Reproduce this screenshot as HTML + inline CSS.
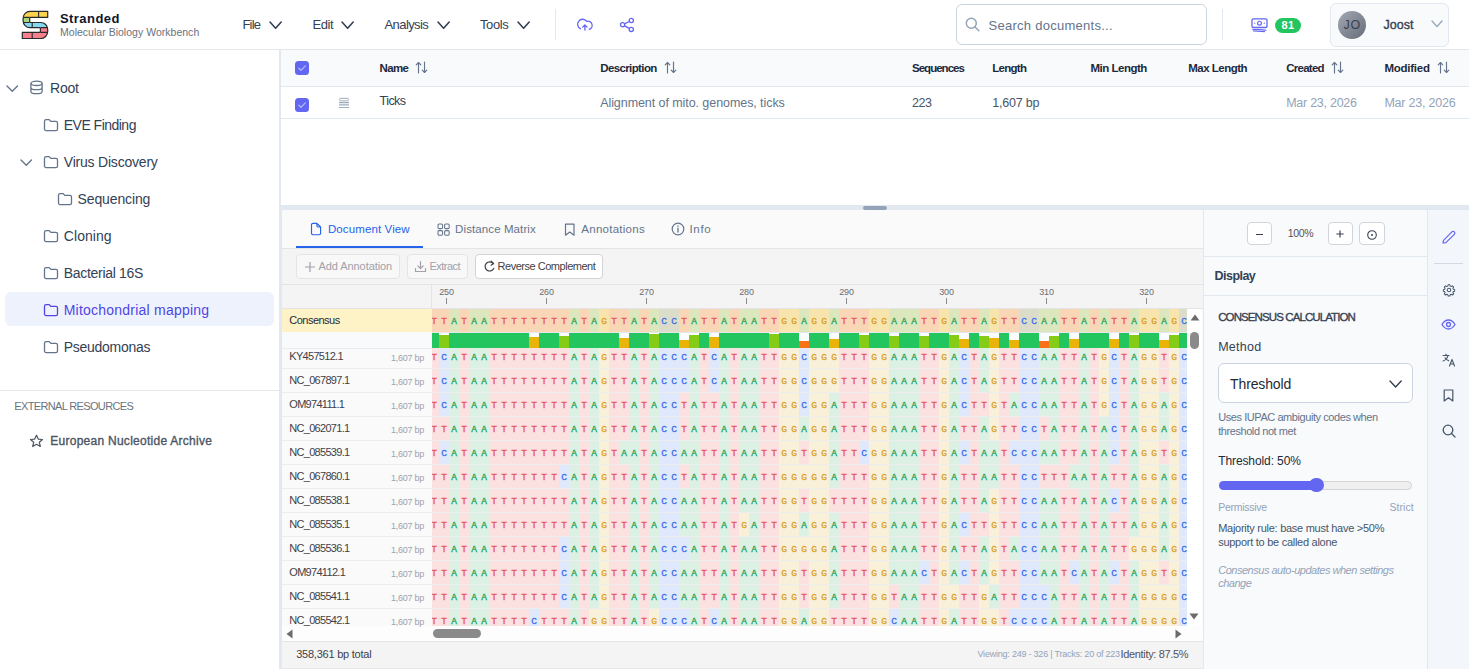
<!DOCTYPE html><html><head><meta charset="utf-8"><style>
*{margin:0;padding:0;box-sizing:content-box}
html,body{width:1469px;height:669px;overflow:hidden;background:#fff;font-family:'Liberation Sans',sans-serif}
.box{position:absolute}
.ic{position:absolute;overflow:visible}
.t{position:absolute;white-space:pre;line-height:normal}
.cbx{position:absolute;width:14px;height:14px;border-radius:3.5px;background:#6366f1}
.aln{position:absolute;overflow:hidden}
.ar{position:absolute;left:0;width:755px}
.ar i{position:absolute;top:0;width:10px;height:100%;font:9.5px/25.5px 'Liberation Mono',monospace;-webkit-text-stroke:0.3px currentColor;text-align:center;font-style:normal}
.cb{position:absolute;left:0;width:755px;background:#fbfcfe}
.cb b{position:absolute;bottom:0}
</style></head><body>
<div class="box" style="left:0;top:0;width:1469px;height:49px;background:#fff;border-bottom:1px solid #e5e7eb"></div>
<svg class="ic" style="left:18px;top:8px;" width="34" height="34" viewBox="0 0 34 34"><defs><clipPath id="sclip"><path d="M29.7 3.3H12C8.2 3.3 5.1 6.4 5.1 10.2V12.7C5.1 16.5 8.2 19.6 12 19.6H21.4C22 19.6 22.4 20 22.4 20.6V23.4C22.4 24 22 24.4 21.4 24.4H4.3V30.5H22.7C26.6 30.5 29.7 27.4 29.7 23.5V21.5C29.7 17.6 26.6 14.5 22.7 14.5H12.7C12.1 14.5 11.7 14.1 11.7 13.5V10.4C11.7 9.8 12.1 9.4 12.7 9.4H29.7Z"/></clipPath></defs>
<g clip-path="url(#sclip)"><rect x="0" y="0" width="34" height="9.4" fill="#fcd34d"/><rect x="0" y="9.4" width="34" height="5.1" fill="#a8d47a"/><rect x="0" y="14.5" width="34" height="5.1" fill="#86d8ee"/><rect x="0" y="19.6" width="34" height="12" fill="#f77f8e"/></g>
<path d="M29.7 3.3H12C8.2 3.3 5.1 6.4 5.1 10.2V12.7C5.1 16.5 8.2 19.6 12 19.6H21.4C22 19.6 22.4 20 22.4 20.6V23.4C22.4 24 22 24.4 21.4 24.4H4.3V30.5H22.7C26.6 30.5 29.7 27.4 29.7 23.5V21.5C29.7 17.6 26.6 14.5 22.7 14.5H12.7C12.1 14.5 11.7 14.1 11.7 13.5V10.4C11.7 9.8 12.1 9.4 12.7 9.4H29.7Z" fill="none" stroke="#2a2a2a" stroke-width="1.2" stroke-linejoin="round"/>
<path d="M5 9.4H11.7M5 14.5H11.7M22.4 19.6H29.8M22.4 24.4H29.8M20.6 3.3V9.4M14.2 14.5V19.6M14.2 24.4V30.5" stroke="#2a2a2a" stroke-width="1.1"/></svg>
<svg class="ic" style="left:268.8px;top:21.2px" width="13.2" height="8.2" viewBox="-1 -1 13.2 8.2"><path d="M0 0L5.6 6.2L11.2 0" fill="none" stroke="#334155" stroke-width="1.6" stroke-linecap="round" stroke-linejoin="round"/></svg>
<svg class="ic" style="left:341px;top:21.2px" width="13.2" height="8.2" viewBox="-1 -1 13.2 8.2"><path d="M0 0L5.6 6.2L11.2 0" fill="none" stroke="#334155" stroke-width="1.6" stroke-linecap="round" stroke-linejoin="round"/></svg>
<svg class="ic" style="left:437.2px;top:21.2px" width="13.2" height="8.2" viewBox="-1 -1 13.2 8.2"><path d="M0 0L5.6 6.2L11.2 0" fill="none" stroke="#334155" stroke-width="1.6" stroke-linecap="round" stroke-linejoin="round"/></svg>
<svg class="ic" style="left:516.7px;top:21.2px" width="13.2" height="8.2" viewBox="-1 -1 13.2 8.2"><path d="M0 0L5.6 6.2L11.2 0" fill="none" stroke="#334155" stroke-width="1.6" stroke-linecap="round" stroke-linejoin="round"/></svg>
<div class="box" style="left:555px;top:9px;width:1px;height:31px;background:#e2e8f0"></div>
<svg class="ic" style="left:577px;top:17px;" width="16" height="16" viewBox="0 0 16 16"><path d="M3.5 11.8A5 5 0 1 1 9.7 4.4A4.1 4.1 0 0 1 12.2 12.4M7.9 13V8M5.7 10.1L7.9 7.9L10.1 10.1" fill="none" stroke="#6366f1" stroke-width="1.3" stroke-linecap="round" stroke-linejoin="round"/></svg>
<svg class="ic" style="left:618px;top:17px;" width="17" height="16" viewBox="0 0 17 16"><circle cx="13.3" cy="3.5" r="2.1" fill="none" stroke="#6366f1" stroke-width="1.3"/><circle cx="4.6" cy="7.8" r="2.1" fill="none" stroke="#6366f1" stroke-width="1.3"/><circle cx="13.3" cy="12.4" r="2.1" fill="none" stroke="#6366f1" stroke-width="1.3"/><path d="M6.5 6.8L11.4 4.5M6.5 8.9L11.4 11.4" stroke="#6366f1" stroke-width="1.3"/></svg>
<div class="box" style="left:956px;top:4px;width:249px;height:39px;border:1px solid #cbd5e1;border-radius:6px;background:#fff"></div>
<svg class="ic" style="left:965px;top:17px;" width="15" height="15" viewBox="0 0 15 15"><circle cx="6.3" cy="6.3" r="5" fill="none" stroke="#94a3b8" stroke-width="1.5"/><path d="M10 10L13.8 13.8" stroke="#94a3b8" stroke-width="1.5" stroke-linecap="round"/></svg>
<div class="box" style="left:1222px;top:9px;width:1px;height:31px;background:#e2e8f0"></div>
<svg class="ic" style="left:1250px;top:17px;" width="19" height="16" viewBox="0 0 19 16"><rect x="2" y="1.8" width="15" height="8.7" rx="1.3" fill="none" stroke="#6366f1" stroke-width="1.3"/><circle cx="9.5" cy="6.15" r="1.9" fill="none" stroke="#6366f1" stroke-width="1.2"/><circle cx="4.7" cy="6.15" r="0.6" fill="#6366f1"/><circle cx="14.3" cy="6.15" r="0.6" fill="#6366f1"/><path d="M2.6 12.2C6 12.4 11 12.9 16 13.2M3.5 13.9C7 14.1 11 14.5 14.5 14.6" fill="none" stroke="#6366f1" stroke-width="1.1" stroke-linecap="round"/></svg>
<div class="box" style="left:1275px;top:18px;width:26px;height:14.5px;border-radius:8px;background:#22c55e"></div>
<div class="box" style="left:1330px;top:3px;width:117px;height:42px;border:1px solid #e2e8f0;border-radius:6px;background:#f8fafc"></div>
<div class="box" style="left:1338px;top:10.5px;width:28px;height:28px;border-radius:50%;background:linear-gradient(135deg,#a3a9b3,#666d79)"></div>
<svg class="ic" style="left:1430.5px;top:20px" width="12" height="7.6" viewBox="-1 -1 12 7.6"><path d="M0 0L5.0 5.6L10 0" fill="none" stroke="#94a3b8" stroke-width="1.3" stroke-linecap="round" stroke-linejoin="round"/></svg>
<div class="box" style="left:279px;top:50px;width:2px;height:619px;background:#e2e8f0"></div>
<svg class="ic" style="left:5.7px;top:84.5px" width="12.5" height="7.2" viewBox="-1 -1 12.5 7.2"><path d="M0 0L5.25 5.2L10.5 0" fill="none" stroke="#64748b" stroke-width="1.4" stroke-linecap="round" stroke-linejoin="round"/></svg>
<svg class="ic" style="left:28.7px;top:80.3px;" width="15" height="15" viewBox="0 0 15 15"><ellipse cx="7.5" cy="3.3" rx="5.6" ry="2.2" fill="none" stroke="#64748b" stroke-width="1.3"/><path d="M1.9 3.3V11.5C1.9 12.7 4.4 13.7 7.5 13.7C10.6 13.7 13.1 12.7 13.1 11.5V3.3M1.9 7.4C1.9 8.6 4.4 9.6 7.5 9.6C10.6 9.6 13.1 8.6 13.1 7.4" fill="none" stroke="#64748b" stroke-width="1.3"/></svg>
<svg class="ic" style="left:43px;top:118px;" width="16" height="14" viewBox="0 0 16 14"><path d="M1.5 3.2C1.5 2.3 2.2 1.6 3.1 1.6H6.2L7.8 3.4H12.9C13.8 3.4 14.5 4.1 14.5 5V11C14.5 11.9 13.8 12.6 12.9 12.6H3.1C2.2 12.6 1.5 11.9 1.5 11Z" fill="none" stroke="#64748b" stroke-width="1.3" stroke-linejoin="round"/></svg>
<svg class="ic" style="left:19.7px;top:158.5px" width="12.5" height="7.2" viewBox="-1 -1 12.5 7.2"><path d="M0 0L5.25 5.2L10.5 0" fill="none" stroke="#64748b" stroke-width="1.4" stroke-linecap="round" stroke-linejoin="round"/></svg>
<svg class="ic" style="left:43px;top:155px;" width="16" height="14" viewBox="0 0 16 14"><path d="M1.5 3.2C1.5 2.3 2.2 1.6 3.1 1.6H6.2L7.8 3.4H12.9C13.8 3.4 14.5 4.1 14.5 5V11C14.5 11.9 13.8 12.6 12.9 12.6H3.1C2.2 12.6 1.5 11.9 1.5 11Z" fill="none" stroke="#64748b" stroke-width="1.3" stroke-linejoin="round"/></svg>
<svg class="ic" style="left:57px;top:192px;" width="16" height="14" viewBox="0 0 16 14"><path d="M1.5 3.2C1.5 2.3 2.2 1.6 3.1 1.6H6.2L7.8 3.4H12.9C13.8 3.4 14.5 4.1 14.5 5V11C14.5 11.9 13.8 12.6 12.9 12.6H3.1C2.2 12.6 1.5 11.9 1.5 11Z" fill="none" stroke="#64748b" stroke-width="1.3" stroke-linejoin="round"/></svg>
<svg class="ic" style="left:43px;top:229px;" width="16" height="14" viewBox="0 0 16 14"><path d="M1.5 3.2C1.5 2.3 2.2 1.6 3.1 1.6H6.2L7.8 3.4H12.9C13.8 3.4 14.5 4.1 14.5 5V11C14.5 11.9 13.8 12.6 12.9 12.6H3.1C2.2 12.6 1.5 11.9 1.5 11Z" fill="none" stroke="#64748b" stroke-width="1.3" stroke-linejoin="round"/></svg>
<svg class="ic" style="left:43px;top:266px;" width="16" height="14" viewBox="0 0 16 14"><path d="M1.5 3.2C1.5 2.3 2.2 1.6 3.1 1.6H6.2L7.8 3.4H12.9C13.8 3.4 14.5 4.1 14.5 5V11C14.5 11.9 13.8 12.6 12.9 12.6H3.1C2.2 12.6 1.5 11.9 1.5 11Z" fill="none" stroke="#64748b" stroke-width="1.3" stroke-linejoin="round"/></svg>
<div class="box" style="left:5px;top:292px;width:269px;height:34px;border-radius:6px;background:#eef2fd"></div>
<svg class="ic" style="left:43px;top:303px;" width="16" height="14" viewBox="0 0 16 14"><path d="M1.5 3.2C1.5 2.3 2.2 1.6 3.1 1.6H6.2L7.8 3.4H12.9C13.8 3.4 14.5 4.1 14.5 5V11C14.5 11.9 13.8 12.6 12.9 12.6H3.1C2.2 12.6 1.5 11.9 1.5 11Z" fill="none" stroke="#4f46e5" stroke-width="1.3" stroke-linejoin="round"/></svg>
<svg class="ic" style="left:43px;top:340px;" width="16" height="14" viewBox="0 0 16 14"><path d="M1.5 3.2C1.5 2.3 2.2 1.6 3.1 1.6H6.2L7.8 3.4H12.9C13.8 3.4 14.5 4.1 14.5 5V11C14.5 11.9 13.8 12.6 12.9 12.6H3.1C2.2 12.6 1.5 11.9 1.5 11Z" fill="none" stroke="#64748b" stroke-width="1.3" stroke-linejoin="round"/></svg>
<div class="box" style="left:0;top:390px;width:279px;height:1px;background:#e5e7eb"></div>
<svg class="ic" style="left:28.5px;top:434px;" width="15" height="14" viewBox="0 0 15 14"><path d="M7.5 1.2L9.3 5.1L13.5 5.5L10.3 8.3L11.3 12.5L7.5 10.3L3.7 12.5L4.7 8.3L1.5 5.5L5.7 5.1Z" fill="none" stroke="#4b5563" stroke-width="1.2" stroke-linejoin="round"/></svg>
<div class="box" style="left:281px;top:50px;width:1188px;height:36px;background:#f8fafc;border-bottom:1px solid #e2e8f0"></div>
<div class="box" style="left:281px;top:118px;width:1188px;height:1px;background:#e2e8f0"></div>
<div class="cbx" style="left:295px;top:61px"></div><svg class="ic" style="left:295px;top:61px;" width="14" height="14" viewBox="0 0 14 14"><path d="M3.8 7.2L6 9.3L10.3 4.9" fill="none" stroke="#b4bcfb" stroke-width="1.2" stroke-linecap="round" stroke-linejoin="round"/></svg>
<div class="cbx" style="left:295px;top:98px"></div><svg class="ic" style="left:295px;top:98px;" width="14" height="14" viewBox="0 0 14 14"><path d="M3.8 7.2L6 9.3L10.3 4.9" fill="none" stroke="#b4bcfb" stroke-width="1.2" stroke-linecap="round" stroke-linejoin="round"/></svg>
<svg class="ic" style="left:338px;top:97px;" width="12" height="12" viewBox="0 0 12 12"><rect x="1.5" y="1.3" width="9" height="2.6" rx="1.3" fill="none" stroke="#a0acbd" stroke-width="1"/><path d="M1 5.6H11M1 7.9H11M1 10.5H11" stroke="#a0acbd" stroke-width="1.1"/></svg>
<svg class="ic" style="left:414.5px;top:60.5px;" width="13" height="13" viewBox="0 0 13 13"><path d="M3.5 12V1.5M1.2 3.8L3.5 1.5L5.8 3.8M9.5 1V11.5M7.2 9.2L9.5 11.5L11.8 9.2" fill="none" stroke="#64748b" stroke-width="1.15" stroke-linecap="round" stroke-linejoin="round"/></svg>
<svg class="ic" style="left:663.5px;top:60.5px;" width="13" height="13" viewBox="0 0 13 13"><path d="M3.5 12V1.5M1.2 3.8L3.5 1.5L5.8 3.8M9.5 1V11.5M7.2 9.2L9.5 11.5L11.8 9.2" fill="none" stroke="#64748b" stroke-width="1.15" stroke-linecap="round" stroke-linejoin="round"/></svg>
<svg class="ic" style="left:1330.5px;top:60.5px;" width="13" height="13" viewBox="0 0 13 13"><path d="M3.5 12V1.5M1.2 3.8L3.5 1.5L5.8 3.8M9.5 1V11.5M7.2 9.2L9.5 11.5L11.8 9.2" fill="none" stroke="#64748b" stroke-width="1.15" stroke-linecap="round" stroke-linejoin="round"/></svg>
<svg class="ic" style="left:1436.5px;top:60.5px;" width="13" height="13" viewBox="0 0 13 13"><path d="M3.5 12V1.5M1.2 3.8L3.5 1.5L5.8 3.8M9.5 1V11.5M7.2 9.2L9.5 11.5L11.8 9.2" fill="none" stroke="#64748b" stroke-width="1.15" stroke-linecap="round" stroke-linejoin="round"/></svg>
<div class="box" style="left:281px;top:205px;width:1188px;height:5px;background:#e2e8f0"></div>
<div class="box" style="left:863px;top:206px;width:24px;height:4px;border-radius:2px;background:#94a3b8"></div>
<div class="box" style="left:281px;top:210px;width:922px;height:459px;background:#fafafa;border-left:1px solid #e5e7eb"></div>
<div class="box" style="left:282px;top:248px;width:921px;height:1px;background:#e4e4e7"></div>
<div class="box" style="left:296px;top:246px;width:127px;height:2px;background:#2563eb"></div>
<svg class="ic" style="left:310px;top:222px;" width="12" height="14" viewBox="0 0 12 14"><path d="M2.9 1.3H6.9L10.6 5V11.3C10.6 12.1 10 12.7 9.2 12.7H2.9C2.1 12.7 1.5 12.1 1.5 11.3V2.7C1.5 1.9 2.1 1.3 2.9 1.3ZM6.9 1.3V3.8C6.9 4.5 7.4 5 8.1 5H10.6" fill="none" stroke="#2563eb" stroke-width="1.15" stroke-linejoin="round"/></svg>
<svg class="ic" style="left:436.5px;top:222.5px;" width="14" height="13" viewBox="0 0 14 13"><rect x="1" y="1" width="4.6" height="4.6" rx="1.2" fill="none" stroke="#64748b" stroke-width="1.05"/><rect x="7.6" y="1" width="4.6" height="4.6" rx="1.2" fill="none" stroke="#64748b" stroke-width="1.05"/><rect x="1" y="7.6" width="4.6" height="4.6" rx="1.2" fill="none" stroke="#64748b" stroke-width="1.05"/><rect x="7.6" y="7.6" width="4.6" height="4.6" rx="1.2" fill="none" stroke="#64748b" stroke-width="1.05"/></svg>
<svg class="ic" style="left:563.5px;top:222.5px;" width="12" height="13" viewBox="0 0 12 13"><path d="M1.5 1.2H10V12.2L5.75 9L1.5 12.2Z" fill="none" stroke="#64748b" stroke-width="1.2" stroke-linejoin="round"/></svg>
<svg class="ic" style="left:671px;top:222px;" width="14" height="14" viewBox="0 0 14 14"><circle cx="7" cy="7" r="5.8" fill="none" stroke="#64748b" stroke-width="1.2"/><path d="M7 6.2V10M7 4V4.3" stroke="#64748b" stroke-width="1.3" stroke-linecap="round"/></svg>
<div class="box" style="left:282px;top:249px;width:921px;height:35px;background:#f4f4f5;border-bottom:1px solid #e4e4e7"></div>
<div class="box" style="left:296px;top:254px;width:102px;height:23px;border:1px solid #e4e4e7;border-radius:4px;background:#f8f8f8"></div>
<svg class="ic" style="left:303.5px;top:260.5px;" width="12" height="12" viewBox="0 0 12 12"><path d="M6 1V11M1 6H11" stroke="#a1a1aa" stroke-width="1.2"/></svg>
<div class="box" style="left:407px;top:254px;width:59px;height:23px;border:1px solid #e4e4e7;border-radius:4px;background:#f8f8f8"></div>
<svg class="ic" style="left:414px;top:259.5px;" width="13" height="13" viewBox="0 0 13 13"><path d="M6.5 1.5V8.5M3.8 5.8L6.5 8.5L9.2 5.8M1.5 8.5V11.5H11.5V8.5" fill="none" stroke="#a1a1aa" stroke-width="1.2" stroke-linecap="round" stroke-linejoin="round"/></svg>
<div class="box" style="left:475px;top:254px;width:126px;height:23px;border:1px solid #d4d4d8;border-radius:4px;background:#fff"></div>
<svg class="ic" style="left:482.5px;top:259.5px;" width="12" height="13" viewBox="0 0 12 13"><path d="M10.3 3.5A4.6 4.6 0 1 0 10.8 8.5" fill="none" stroke="#3f3f46" stroke-width="1.2" stroke-linecap="round"/><path d="M8.2 1.2L10.6 3.6L8.2 5.2" fill="none" stroke="#3f3f46" stroke-width="1.2" stroke-linecap="round" stroke-linejoin="round"/></svg>
<div class="box" style="left:282px;top:285px;width:921px;height:23px;background:#f4f4f5;border-bottom:1px solid #e4e4e7"></div>
<div class="box" style="left:431px;top:285px;width:1px;height:24px;background:#e4e4e7"></div>
<div class="box" style="left:446px;top:298px;width:1px;height:6px;background:#8a8a92"></div>
<div class="box" style="left:546px;top:298px;width:1px;height:6px;background:#8a8a92"></div>
<div class="box" style="left:646px;top:298px;width:1px;height:6px;background:#8a8a92"></div>
<div class="box" style="left:746px;top:298px;width:1px;height:6px;background:#8a8a92"></div>
<div class="box" style="left:846px;top:298px;width:1px;height:6px;background:#8a8a92"></div>
<div class="box" style="left:946px;top:298px;width:1px;height:6px;background:#8a8a92"></div>
<div class="box" style="left:1046px;top:298px;width:1px;height:6px;background:#8a8a92"></div>
<div class="box" style="left:1146px;top:298px;width:1px;height:6px;background:#8a8a92"></div>
<div class="box" style="left:282px;top:309px;width:150px;height:23px;background:#fef3c7"></div>
<div class="box" style="left:282px;top:332px;width:150px;height:16px;background:#f8fafc"></div>
<div class="box" style="left:282px;top:348px;width:905px;height:1px;background:#ececef"></div>
<div class="box" style="left:282px;top:349px;width:150px;height:19px;background:#fafafa"></div>
<div class="box" style="left:282px;top:368px;width:905px;height:1px;background:#ededed"></div>
<div class="box" style="left:282px;top:369px;width:150px;height:23px;background:#fafafa"></div>
<div class="box" style="left:282px;top:392px;width:905px;height:1px;background:#ededed"></div>
<div class="box" style="left:282px;top:393px;width:150px;height:23px;background:#fafafa"></div>
<div class="box" style="left:282px;top:416px;width:905px;height:1px;background:#ededed"></div>
<div class="box" style="left:282px;top:417px;width:150px;height:23px;background:#fafafa"></div>
<div class="box" style="left:282px;top:440px;width:905px;height:1px;background:#ededed"></div>
<div class="box" style="left:282px;top:441px;width:150px;height:23px;background:#fafafa"></div>
<div class="box" style="left:282px;top:464px;width:905px;height:1px;background:#ededed"></div>
<div class="box" style="left:282px;top:465px;width:150px;height:23px;background:#fafafa"></div>
<div class="box" style="left:282px;top:488px;width:905px;height:1px;background:#ededed"></div>
<div class="box" style="left:282px;top:489px;width:150px;height:23px;background:#fafafa"></div>
<div class="box" style="left:282px;top:512px;width:905px;height:1px;background:#ededed"></div>
<div class="box" style="left:282px;top:513px;width:150px;height:23px;background:#fafafa"></div>
<div class="box" style="left:282px;top:536px;width:905px;height:1px;background:#ededed"></div>
<div class="box" style="left:282px;top:537px;width:150px;height:23px;background:#fafafa"></div>
<div class="box" style="left:282px;top:560px;width:905px;height:1px;background:#ededed"></div>
<div class="box" style="left:282px;top:561px;width:150px;height:23px;background:#fafafa"></div>
<div class="box" style="left:282px;top:584px;width:905px;height:1px;background:#ededed"></div>
<div class="box" style="left:282px;top:585px;width:150px;height:23px;background:#fafafa"></div>
<div class="box" style="left:282px;top:608px;width:905px;height:1px;background:#ededed"></div>
<div class="box" style="left:282px;top:609px;width:150px;height:23px;background:#fafafa"></div>
<div class="box" style="left:282px;top:632px;width:905px;height:1px;background:#ededed"></div>
<div class="aln" style="left:432px;top:0;width:755px;height:626px"><div class="ar" style="top:309px;height:23px"><i style="left:-3px;background:#f9d7b6;color:#e65a5a">T</i><i style="left:7px;background:#f9d7b6;color:#e65a5a">T</i><i style="left:17px;background:#dde7be;color:#27a35a">A</i><i style="left:27px;background:#f9d7b6;color:#e65a5a">T</i><i style="left:37px;background:#dde7be;color:#27a35a">A</i><i style="left:47px;background:#dde7be;color:#27a35a">A</i><i style="left:57px;background:#f9d7b6;color:#e65a5a">T</i><i style="left:67px;background:#f9d7b6;color:#e65a5a">T</i><i style="left:77px;background:#f9d7b6;color:#e65a5a">T</i><i style="left:87px;background:#f9d7b6;color:#e65a5a">T</i><i style="left:97px;background:#f9d7b6;color:#e65a5a">T</i><i style="left:107px;background:#f9d7b6;color:#e65a5a">T</i><i style="left:117px;background:#f9d7b6;color:#e65a5a">T</i><i style="left:127px;background:#f9d7b6;color:#e65a5a">T</i><i style="left:137px;background:#dde7be;color:#27a35a">A</i><i style="left:147px;background:#f9d7b6;color:#e65a5a">T</i><i style="left:157px;background:#dde7be;color:#27a35a">A</i><i style="left:167px;background:#f8e5ad;color:#d6a026">G</i><i style="left:177px;background:#f9d7b6;color:#e65a5a">T</i><i style="left:187px;background:#f9d7b6;color:#e65a5a">T</i><i style="left:197px;background:#dde7be;color:#27a35a">A</i><i style="left:207px;background:#f9d7b6;color:#e65a5a">T</i><i style="left:217px;background:#dde7be;color:#27a35a">A</i><i style="left:227px;background:#dcdccb;color:#3a6fe8">C</i><i style="left:237px;background:#dcdccb;color:#3a6fe8">C</i><i style="left:247px;background:#f9d7b6;color:#e65a5a">T</i><i style="left:257px;background:#dde7be;color:#27a35a">A</i><i style="left:267px;background:#f9d7b6;color:#e65a5a">T</i><i style="left:277px;background:#f9d7b6;color:#e65a5a">T</i><i style="left:287px;background:#dde7be;color:#27a35a">A</i><i style="left:297px;background:#f9d7b6;color:#e65a5a">T</i><i style="left:307px;background:#dde7be;color:#27a35a">A</i><i style="left:317px;background:#dde7be;color:#27a35a">A</i><i style="left:327px;background:#f9d7b6;color:#e65a5a">T</i><i style="left:337px;background:#f9d7b6;color:#e65a5a">T</i><i style="left:347px;background:#f8e5ad;color:#d6a026">G</i><i style="left:357px;background:#f8e5ad;color:#d6a026">G</i><i style="left:367px;background:#dde7be;color:#27a35a">A</i><i style="left:377px;background:#f8e5ad;color:#d6a026">G</i><i style="left:387px;background:#f8e5ad;color:#d6a026">G</i><i style="left:397px;background:#dde7be;color:#27a35a">A</i><i style="left:407px;background:#f9d7b6;color:#e65a5a">T</i><i style="left:417px;background:#f9d7b6;color:#e65a5a">T</i><i style="left:427px;background:#f9d7b6;color:#e65a5a">T</i><i style="left:437px;background:#f8e5ad;color:#d6a026">G</i><i style="left:447px;background:#f8e5ad;color:#d6a026">G</i><i style="left:457px;background:#dde7be;color:#27a35a">A</i><i style="left:467px;background:#dde7be;color:#27a35a">A</i><i style="left:477px;background:#dde7be;color:#27a35a">A</i><i style="left:487px;background:#f9d7b6;color:#e65a5a">T</i><i style="left:497px;background:#f9d7b6;color:#e65a5a">T</i><i style="left:507px;background:#f8e5ad;color:#d6a026">G</i><i style="left:517px;background:#dde7be;color:#27a35a">A</i><i style="left:527px;background:#f9d7b6;color:#e65a5a">T</i><i style="left:537px;background:#f9d7b6;color:#e65a5a">T</i><i style="left:547px;background:#dde7be;color:#27a35a">A</i><i style="left:557px;background:#f8e5ad;color:#d6a026">G</i><i style="left:567px;background:#f9d7b6;color:#e65a5a">T</i><i style="left:577px;background:#f9d7b6;color:#e65a5a">T</i><i style="left:587px;background:#dcdccb;color:#3a6fe8">C</i><i style="left:597px;background:#dcdccb;color:#3a6fe8">C</i><i style="left:607px;background:#dde7be;color:#27a35a">A</i><i style="left:617px;background:#dde7be;color:#27a35a">A</i><i style="left:627px;background:#f9d7b6;color:#e65a5a">T</i><i style="left:637px;background:#f9d7b6;color:#e65a5a">T</i><i style="left:647px;background:#dde7be;color:#27a35a">A</i><i style="left:657px;background:#f9d7b6;color:#e65a5a">T</i><i style="left:667px;background:#dde7be;color:#27a35a">A</i><i style="left:677px;background:#f9d7b6;color:#e65a5a">T</i><i style="left:687px;background:#f9d7b6;color:#e65a5a">T</i><i style="left:697px;background:#dde7be;color:#27a35a">A</i><i style="left:707px;background:#f8e5ad;color:#d6a026">G</i><i style="left:717px;background:#f8e5ad;color:#d6a026">G</i><i style="left:727px;background:#dde7be;color:#27a35a">A</i><i style="left:737px;background:#f8e5ad;color:#d6a026">G</i><i style="left:747px;background:#dcdccb;color:#3a6fe8">C</i></div>
<div class="ar sr" style="top:345px;height:23px"><i style="left:-3px;background:#fce1e1;color:#e65a5a">T</i><i style="left:7px;background:#e0e8fc;color:#3a6fe8">C</i><i style="left:17px;background:#dcf1e3;color:#27a35a">A</i><i style="left:27px;background:#fce1e1;color:#e65a5a">T</i><i style="left:37px;background:#dcf1e3;color:#27a35a">A</i><i style="left:47px;background:#dcf1e3;color:#27a35a">A</i><i style="left:57px;background:#fce1e1;color:#e65a5a">T</i><i style="left:67px;background:#fce1e1;color:#e65a5a">T</i><i style="left:77px;background:#fce1e1;color:#e65a5a">T</i><i style="left:87px;background:#fce1e1;color:#e65a5a">T</i><i style="left:97px;background:#fce1e1;color:#e65a5a">T</i><i style="left:107px;background:#fce1e1;color:#e65a5a">T</i><i style="left:117px;background:#fce1e1;color:#e65a5a">T</i><i style="left:127px;background:#fce1e1;color:#e65a5a">T</i><i style="left:137px;background:#dcf1e3;color:#27a35a">A</i><i style="left:147px;background:#fce1e1;color:#e65a5a">T</i><i style="left:157px;background:#dcf1e3;color:#27a35a">A</i><i style="left:167px;background:#f9f0da;color:#d6a026">G</i><i style="left:177px;background:#fce1e1;color:#e65a5a">T</i><i style="left:187px;background:#fce1e1;color:#e65a5a">T</i><i style="left:197px;background:#dcf1e3;color:#27a35a">A</i><i style="left:207px;background:#fce1e1;color:#e65a5a">T</i><i style="left:217px;background:#dcf1e3;color:#27a35a">A</i><i style="left:227px;background:#e0e8fc;color:#3a6fe8">C</i><i style="left:237px;background:#e0e8fc;color:#3a6fe8">C</i><i style="left:247px;background:#e0e8fc;color:#3a6fe8">C</i><i style="left:257px;background:#dcf1e3;color:#27a35a">A</i><i style="left:267px;background:#fce1e1;color:#e65a5a">T</i><i style="left:277px;background:#e0e8fc;color:#3a6fe8">C</i><i style="left:287px;background:#dcf1e3;color:#27a35a">A</i><i style="left:297px;background:#fce1e1;color:#e65a5a">T</i><i style="left:307px;background:#dcf1e3;color:#27a35a">A</i><i style="left:317px;background:#dcf1e3;color:#27a35a">A</i><i style="left:327px;background:#fce1e1;color:#e65a5a">T</i><i style="left:337px;background:#fce1e1;color:#e65a5a">T</i><i style="left:347px;background:#f9f0da;color:#d6a026">G</i><i style="left:357px;background:#f9f0da;color:#d6a026">G</i><i style="left:367px;background:#e0e8fc;color:#3a6fe8">C</i><i style="left:377px;background:#f9f0da;color:#d6a026">G</i><i style="left:387px;background:#f9f0da;color:#d6a026">G</i><i style="left:397px;background:#f9f0da;color:#d6a026">G</i><i style="left:407px;background:#fce1e1;color:#e65a5a">T</i><i style="left:417px;background:#fce1e1;color:#e65a5a">T</i><i style="left:427px;background:#fce1e1;color:#e65a5a">T</i><i style="left:437px;background:#f9f0da;color:#d6a026">G</i><i style="left:447px;background:#f9f0da;color:#d6a026">G</i><i style="left:457px;background:#dcf1e3;color:#27a35a">A</i><i style="left:467px;background:#dcf1e3;color:#27a35a">A</i><i style="left:477px;background:#dcf1e3;color:#27a35a">A</i><i style="left:487px;background:#fce1e1;color:#e65a5a">T</i><i style="left:497px;background:#fce1e1;color:#e65a5a">T</i><i style="left:507px;background:#f9f0da;color:#d6a026">G</i><i style="left:517px;background:#dcf1e3;color:#27a35a">A</i><i style="left:527px;background:#e0e8fc;color:#3a6fe8">C</i><i style="left:537px;background:#fce1e1;color:#e65a5a">T</i><i style="left:547px;background:#dcf1e3;color:#27a35a">A</i><i style="left:557px;background:#f9f0da;color:#d6a026">G</i><i style="left:567px;background:#fce1e1;color:#e65a5a">T</i><i style="left:577px;background:#fce1e1;color:#e65a5a">T</i><i style="left:587px;background:#e0e8fc;color:#3a6fe8">C</i><i style="left:597px;background:#e0e8fc;color:#3a6fe8">C</i><i style="left:607px;background:#dcf1e3;color:#27a35a">A</i><i style="left:617px;background:#dcf1e3;color:#27a35a">A</i><i style="left:627px;background:#fce1e1;color:#e65a5a">T</i><i style="left:637px;background:#fce1e1;color:#e65a5a">T</i><i style="left:647px;background:#dcf1e3;color:#27a35a">A</i><i style="left:657px;background:#fce1e1;color:#e65a5a">T</i><i style="left:667px;background:#f9f0da;color:#d6a026">G</i><i style="left:677px;background:#e0e8fc;color:#3a6fe8">C</i><i style="left:687px;background:#fce1e1;color:#e65a5a">T</i><i style="left:697px;background:#dcf1e3;color:#27a35a">A</i><i style="left:707px;background:#f9f0da;color:#d6a026">G</i><i style="left:717px;background:#f9f0da;color:#d6a026">G</i><i style="left:727px;background:#fce1e1;color:#e65a5a">T</i><i style="left:737px;background:#f9f0da;color:#d6a026">G</i><i style="left:747px;background:#e0e8fc;color:#3a6fe8">C</i></div>
<div class="ar sr" style="top:369px;height:23px"><i style="left:-3px;background:#fce1e1;color:#e65a5a">T</i><i style="left:7px;background:#e0e8fc;color:#3a6fe8">C</i><i style="left:17px;background:#dcf1e3;color:#27a35a">A</i><i style="left:27px;background:#fce1e1;color:#e65a5a">T</i><i style="left:37px;background:#dcf1e3;color:#27a35a">A</i><i style="left:47px;background:#dcf1e3;color:#27a35a">A</i><i style="left:57px;background:#fce1e1;color:#e65a5a">T</i><i style="left:67px;background:#fce1e1;color:#e65a5a">T</i><i style="left:77px;background:#fce1e1;color:#e65a5a">T</i><i style="left:87px;background:#fce1e1;color:#e65a5a">T</i><i style="left:97px;background:#fce1e1;color:#e65a5a">T</i><i style="left:107px;background:#fce1e1;color:#e65a5a">T</i><i style="left:117px;background:#fce1e1;color:#e65a5a">T</i><i style="left:127px;background:#fce1e1;color:#e65a5a">T</i><i style="left:137px;background:#dcf1e3;color:#27a35a">A</i><i style="left:147px;background:#fce1e1;color:#e65a5a">T</i><i style="left:157px;background:#dcf1e3;color:#27a35a">A</i><i style="left:167px;background:#f9f0da;color:#d6a026">G</i><i style="left:177px;background:#fce1e1;color:#e65a5a">T</i><i style="left:187px;background:#fce1e1;color:#e65a5a">T</i><i style="left:197px;background:#dcf1e3;color:#27a35a">A</i><i style="left:207px;background:#fce1e1;color:#e65a5a">T</i><i style="left:217px;background:#dcf1e3;color:#27a35a">A</i><i style="left:227px;background:#e0e8fc;color:#3a6fe8">C</i><i style="left:237px;background:#e0e8fc;color:#3a6fe8">C</i><i style="left:247px;background:#e0e8fc;color:#3a6fe8">C</i><i style="left:257px;background:#dcf1e3;color:#27a35a">A</i><i style="left:267px;background:#fce1e1;color:#e65a5a">T</i><i style="left:277px;background:#e0e8fc;color:#3a6fe8">C</i><i style="left:287px;background:#dcf1e3;color:#27a35a">A</i><i style="left:297px;background:#fce1e1;color:#e65a5a">T</i><i style="left:307px;background:#dcf1e3;color:#27a35a">A</i><i style="left:317px;background:#dcf1e3;color:#27a35a">A</i><i style="left:327px;background:#fce1e1;color:#e65a5a">T</i><i style="left:337px;background:#fce1e1;color:#e65a5a">T</i><i style="left:347px;background:#f9f0da;color:#d6a026">G</i><i style="left:357px;background:#f9f0da;color:#d6a026">G</i><i style="left:367px;background:#e0e8fc;color:#3a6fe8">C</i><i style="left:377px;background:#f9f0da;color:#d6a026">G</i><i style="left:387px;background:#f9f0da;color:#d6a026">G</i><i style="left:397px;background:#f9f0da;color:#d6a026">G</i><i style="left:407px;background:#fce1e1;color:#e65a5a">T</i><i style="left:417px;background:#fce1e1;color:#e65a5a">T</i><i style="left:427px;background:#fce1e1;color:#e65a5a">T</i><i style="left:437px;background:#f9f0da;color:#d6a026">G</i><i style="left:447px;background:#f9f0da;color:#d6a026">G</i><i style="left:457px;background:#dcf1e3;color:#27a35a">A</i><i style="left:467px;background:#dcf1e3;color:#27a35a">A</i><i style="left:477px;background:#dcf1e3;color:#27a35a">A</i><i style="left:487px;background:#fce1e1;color:#e65a5a">T</i><i style="left:497px;background:#fce1e1;color:#e65a5a">T</i><i style="left:507px;background:#f9f0da;color:#d6a026">G</i><i style="left:517px;background:#dcf1e3;color:#27a35a">A</i><i style="left:527px;background:#e0e8fc;color:#3a6fe8">C</i><i style="left:537px;background:#fce1e1;color:#e65a5a">T</i><i style="left:547px;background:#dcf1e3;color:#27a35a">A</i><i style="left:557px;background:#f9f0da;color:#d6a026">G</i><i style="left:567px;background:#fce1e1;color:#e65a5a">T</i><i style="left:577px;background:#fce1e1;color:#e65a5a">T</i><i style="left:587px;background:#e0e8fc;color:#3a6fe8">C</i><i style="left:597px;background:#e0e8fc;color:#3a6fe8">C</i><i style="left:607px;background:#dcf1e3;color:#27a35a">A</i><i style="left:617px;background:#dcf1e3;color:#27a35a">A</i><i style="left:627px;background:#fce1e1;color:#e65a5a">T</i><i style="left:637px;background:#fce1e1;color:#e65a5a">T</i><i style="left:647px;background:#dcf1e3;color:#27a35a">A</i><i style="left:657px;background:#fce1e1;color:#e65a5a">T</i><i style="left:667px;background:#f9f0da;color:#d6a026">G</i><i style="left:677px;background:#e0e8fc;color:#3a6fe8">C</i><i style="left:687px;background:#fce1e1;color:#e65a5a">T</i><i style="left:697px;background:#dcf1e3;color:#27a35a">A</i><i style="left:707px;background:#f9f0da;color:#d6a026">G</i><i style="left:717px;background:#f9f0da;color:#d6a026">G</i><i style="left:727px;background:#fce1e1;color:#e65a5a">T</i><i style="left:737px;background:#f9f0da;color:#d6a026">G</i><i style="left:747px;background:#e0e8fc;color:#3a6fe8">C</i></div>
<div class="ar sr" style="top:393px;height:23px"><i style="left:-3px;background:#fce1e1;color:#e65a5a">T</i><i style="left:7px;background:#e0e8fc;color:#3a6fe8">C</i><i style="left:17px;background:#dcf1e3;color:#27a35a">A</i><i style="left:27px;background:#fce1e1;color:#e65a5a">T</i><i style="left:37px;background:#dcf1e3;color:#27a35a">A</i><i style="left:47px;background:#dcf1e3;color:#27a35a">A</i><i style="left:57px;background:#fce1e1;color:#e65a5a">T</i><i style="left:67px;background:#fce1e1;color:#e65a5a">T</i><i style="left:77px;background:#fce1e1;color:#e65a5a">T</i><i style="left:87px;background:#fce1e1;color:#e65a5a">T</i><i style="left:97px;background:#fce1e1;color:#e65a5a">T</i><i style="left:107px;background:#fce1e1;color:#e65a5a">T</i><i style="left:117px;background:#fce1e1;color:#e65a5a">T</i><i style="left:127px;background:#fce1e1;color:#e65a5a">T</i><i style="left:137px;background:#dcf1e3;color:#27a35a">A</i><i style="left:147px;background:#fce1e1;color:#e65a5a">T</i><i style="left:157px;background:#dcf1e3;color:#27a35a">A</i><i style="left:167px;background:#f9f0da;color:#d6a026">G</i><i style="left:177px;background:#fce1e1;color:#e65a5a">T</i><i style="left:187px;background:#fce1e1;color:#e65a5a">T</i><i style="left:197px;background:#dcf1e3;color:#27a35a">A</i><i style="left:207px;background:#fce1e1;color:#e65a5a">T</i><i style="left:217px;background:#dcf1e3;color:#27a35a">A</i><i style="left:227px;background:#e0e8fc;color:#3a6fe8">C</i><i style="left:237px;background:#e0e8fc;color:#3a6fe8">C</i><i style="left:247px;background:#fce1e1;color:#e65a5a">T</i><i style="left:257px;background:#dcf1e3;color:#27a35a">A</i><i style="left:267px;background:#fce1e1;color:#e65a5a">T</i><i style="left:277px;background:#fce1e1;color:#e65a5a">T</i><i style="left:287px;background:#dcf1e3;color:#27a35a">A</i><i style="left:297px;background:#fce1e1;color:#e65a5a">T</i><i style="left:307px;background:#dcf1e3;color:#27a35a">A</i><i style="left:317px;background:#dcf1e3;color:#27a35a">A</i><i style="left:327px;background:#fce1e1;color:#e65a5a">T</i><i style="left:337px;background:#fce1e1;color:#e65a5a">T</i><i style="left:347px;background:#f9f0da;color:#d6a026">G</i><i style="left:357px;background:#f9f0da;color:#d6a026">G</i><i style="left:367px;background:#e0e8fc;color:#3a6fe8">C</i><i style="left:377px;background:#f9f0da;color:#d6a026">G</i><i style="left:387px;background:#f9f0da;color:#d6a026">G</i><i style="left:397px;background:#dcf1e3;color:#27a35a">A</i><i style="left:407px;background:#fce1e1;color:#e65a5a">T</i><i style="left:417px;background:#fce1e1;color:#e65a5a">T</i><i style="left:427px;background:#fce1e1;color:#e65a5a">T</i><i style="left:437px;background:#f9f0da;color:#d6a026">G</i><i style="left:447px;background:#f9f0da;color:#d6a026">G</i><i style="left:457px;background:#dcf1e3;color:#27a35a">A</i><i style="left:467px;background:#dcf1e3;color:#27a35a">A</i><i style="left:477px;background:#dcf1e3;color:#27a35a">A</i><i style="left:487px;background:#fce1e1;color:#e65a5a">T</i><i style="left:497px;background:#fce1e1;color:#e65a5a">T</i><i style="left:507px;background:#f9f0da;color:#d6a026">G</i><i style="left:517px;background:#dcf1e3;color:#27a35a">A</i><i style="left:527px;background:#e0e8fc;color:#3a6fe8">C</i><i style="left:537px;background:#fce1e1;color:#e65a5a">T</i><i style="left:547px;background:#fce1e1;color:#e65a5a">T</i><i style="left:557px;background:#f9f0da;color:#d6a026">G</i><i style="left:567px;background:#fce1e1;color:#e65a5a">T</i><i style="left:577px;background:#dcf1e3;color:#27a35a">A</i><i style="left:587px;background:#e0e8fc;color:#3a6fe8">C</i><i style="left:597px;background:#e0e8fc;color:#3a6fe8">C</i><i style="left:607px;background:#dcf1e3;color:#27a35a">A</i><i style="left:617px;background:#dcf1e3;color:#27a35a">A</i><i style="left:627px;background:#fce1e1;color:#e65a5a">T</i><i style="left:637px;background:#fce1e1;color:#e65a5a">T</i><i style="left:647px;background:#dcf1e3;color:#27a35a">A</i><i style="left:657px;background:#fce1e1;color:#e65a5a">T</i><i style="left:667px;background:#f9f0da;color:#d6a026">G</i><i style="left:677px;background:#e0e8fc;color:#3a6fe8">C</i><i style="left:687px;background:#fce1e1;color:#e65a5a">T</i><i style="left:697px;background:#dcf1e3;color:#27a35a">A</i><i style="left:707px;background:#f9f0da;color:#d6a026">G</i><i style="left:717px;background:#f9f0da;color:#d6a026">G</i><i style="left:727px;background:#dcf1e3;color:#27a35a">A</i><i style="left:737px;background:#f9f0da;color:#d6a026">G</i><i style="left:747px;background:#e0e8fc;color:#3a6fe8">C</i></div>
<div class="ar sr" style="top:417px;height:23px"><i style="left:-3px;background:#fce1e1;color:#e65a5a">T</i><i style="left:7px;background:#fce1e1;color:#e65a5a">T</i><i style="left:17px;background:#dcf1e3;color:#27a35a">A</i><i style="left:27px;background:#fce1e1;color:#e65a5a">T</i><i style="left:37px;background:#dcf1e3;color:#27a35a">A</i><i style="left:47px;background:#dcf1e3;color:#27a35a">A</i><i style="left:57px;background:#fce1e1;color:#e65a5a">T</i><i style="left:67px;background:#fce1e1;color:#e65a5a">T</i><i style="left:77px;background:#fce1e1;color:#e65a5a">T</i><i style="left:87px;background:#fce1e1;color:#e65a5a">T</i><i style="left:97px;background:#fce1e1;color:#e65a5a">T</i><i style="left:107px;background:#fce1e1;color:#e65a5a">T</i><i style="left:117px;background:#fce1e1;color:#e65a5a">T</i><i style="left:127px;background:#fce1e1;color:#e65a5a">T</i><i style="left:137px;background:#dcf1e3;color:#27a35a">A</i><i style="left:147px;background:#fce1e1;color:#e65a5a">T</i><i style="left:157px;background:#dcf1e3;color:#27a35a">A</i><i style="left:167px;background:#f9f0da;color:#d6a026">G</i><i style="left:177px;background:#fce1e1;color:#e65a5a">T</i><i style="left:187px;background:#fce1e1;color:#e65a5a">T</i><i style="left:197px;background:#dcf1e3;color:#27a35a">A</i><i style="left:207px;background:#fce1e1;color:#e65a5a">T</i><i style="left:217px;background:#dcf1e3;color:#27a35a">A</i><i style="left:227px;background:#e0e8fc;color:#3a6fe8">C</i><i style="left:237px;background:#e0e8fc;color:#3a6fe8">C</i><i style="left:247px;background:#fce1e1;color:#e65a5a">T</i><i style="left:257px;background:#dcf1e3;color:#27a35a">A</i><i style="left:267px;background:#fce1e1;color:#e65a5a">T</i><i style="left:277px;background:#fce1e1;color:#e65a5a">T</i><i style="left:287px;background:#dcf1e3;color:#27a35a">A</i><i style="left:297px;background:#fce1e1;color:#e65a5a">T</i><i style="left:307px;background:#dcf1e3;color:#27a35a">A</i><i style="left:317px;background:#dcf1e3;color:#27a35a">A</i><i style="left:327px;background:#fce1e1;color:#e65a5a">T</i><i style="left:337px;background:#fce1e1;color:#e65a5a">T</i><i style="left:347px;background:#f9f0da;color:#d6a026">G</i><i style="left:357px;background:#f9f0da;color:#d6a026">G</i><i style="left:367px;background:#dcf1e3;color:#27a35a">A</i><i style="left:377px;background:#f9f0da;color:#d6a026">G</i><i style="left:387px;background:#f9f0da;color:#d6a026">G</i><i style="left:397px;background:#dcf1e3;color:#27a35a">A</i><i style="left:407px;background:#fce1e1;color:#e65a5a">T</i><i style="left:417px;background:#fce1e1;color:#e65a5a">T</i><i style="left:427px;background:#fce1e1;color:#e65a5a">T</i><i style="left:437px;background:#f9f0da;color:#d6a026">G</i><i style="left:447px;background:#f9f0da;color:#d6a026">G</i><i style="left:457px;background:#dcf1e3;color:#27a35a">A</i><i style="left:467px;background:#dcf1e3;color:#27a35a">A</i><i style="left:477px;background:#dcf1e3;color:#27a35a">A</i><i style="left:487px;background:#fce1e1;color:#e65a5a">T</i><i style="left:497px;background:#fce1e1;color:#e65a5a">T</i><i style="left:507px;background:#f9f0da;color:#d6a026">G</i><i style="left:517px;background:#dcf1e3;color:#27a35a">A</i><i style="left:527px;background:#fce1e1;color:#e65a5a">T</i><i style="left:537px;background:#fce1e1;color:#e65a5a">T</i><i style="left:547px;background:#dcf1e3;color:#27a35a">A</i><i style="left:557px;background:#f9f0da;color:#d6a026">G</i><i style="left:567px;background:#fce1e1;color:#e65a5a">T</i><i style="left:577px;background:#fce1e1;color:#e65a5a">T</i><i style="left:587px;background:#e0e8fc;color:#3a6fe8">C</i><i style="left:597px;background:#e0e8fc;color:#3a6fe8">C</i><i style="left:607px;background:#fce1e1;color:#e65a5a">T</i><i style="left:617px;background:#dcf1e3;color:#27a35a">A</i><i style="left:627px;background:#fce1e1;color:#e65a5a">T</i><i style="left:637px;background:#fce1e1;color:#e65a5a">T</i><i style="left:647px;background:#dcf1e3;color:#27a35a">A</i><i style="left:657px;background:#fce1e1;color:#e65a5a">T</i><i style="left:667px;background:#dcf1e3;color:#27a35a">A</i><i style="left:677px;background:#e0e8fc;color:#3a6fe8">C</i><i style="left:687px;background:#fce1e1;color:#e65a5a">T</i><i style="left:697px;background:#dcf1e3;color:#27a35a">A</i><i style="left:707px;background:#f9f0da;color:#d6a026">G</i><i style="left:717px;background:#f9f0da;color:#d6a026">G</i><i style="left:727px;background:#dcf1e3;color:#27a35a">A</i><i style="left:737px;background:#f9f0da;color:#d6a026">G</i><i style="left:747px;background:#e0e8fc;color:#3a6fe8">C</i></div>
<div class="ar sr" style="top:441px;height:23px"><i style="left:-3px;background:#fce1e1;color:#e65a5a">T</i><i style="left:7px;background:#e0e8fc;color:#3a6fe8">C</i><i style="left:17px;background:#dcf1e3;color:#27a35a">A</i><i style="left:27px;background:#fce1e1;color:#e65a5a">T</i><i style="left:37px;background:#dcf1e3;color:#27a35a">A</i><i style="left:47px;background:#dcf1e3;color:#27a35a">A</i><i style="left:57px;background:#fce1e1;color:#e65a5a">T</i><i style="left:67px;background:#fce1e1;color:#e65a5a">T</i><i style="left:77px;background:#fce1e1;color:#e65a5a">T</i><i style="left:87px;background:#fce1e1;color:#e65a5a">T</i><i style="left:97px;background:#fce1e1;color:#e65a5a">T</i><i style="left:107px;background:#fce1e1;color:#e65a5a">T</i><i style="left:117px;background:#fce1e1;color:#e65a5a">T</i><i style="left:127px;background:#fce1e1;color:#e65a5a">T</i><i style="left:137px;background:#dcf1e3;color:#27a35a">A</i><i style="left:147px;background:#fce1e1;color:#e65a5a">T</i><i style="left:157px;background:#dcf1e3;color:#27a35a">A</i><i style="left:167px;background:#f9f0da;color:#d6a026">G</i><i style="left:177px;background:#fce1e1;color:#e65a5a">T</i><i style="left:187px;background:#dcf1e3;color:#27a35a">A</i><i style="left:197px;background:#dcf1e3;color:#27a35a">A</i><i style="left:207px;background:#fce1e1;color:#e65a5a">T</i><i style="left:217px;background:#dcf1e3;color:#27a35a">A</i><i style="left:227px;background:#e0e8fc;color:#3a6fe8">C</i><i style="left:237px;background:#e0e8fc;color:#3a6fe8">C</i><i style="left:247px;background:#dcf1e3;color:#27a35a">A</i><i style="left:257px;background:#dcf1e3;color:#27a35a">A</i><i style="left:267px;background:#fce1e1;color:#e65a5a">T</i><i style="left:277px;background:#fce1e1;color:#e65a5a">T</i><i style="left:287px;background:#dcf1e3;color:#27a35a">A</i><i style="left:297px;background:#fce1e1;color:#e65a5a">T</i><i style="left:307px;background:#dcf1e3;color:#27a35a">A</i><i style="left:317px;background:#dcf1e3;color:#27a35a">A</i><i style="left:327px;background:#fce1e1;color:#e65a5a">T</i><i style="left:337px;background:#fce1e1;color:#e65a5a">T</i><i style="left:347px;background:#f9f0da;color:#d6a026">G</i><i style="left:357px;background:#f9f0da;color:#d6a026">G</i><i style="left:367px;background:#fce1e1;color:#e65a5a">T</i><i style="left:377px;background:#f9f0da;color:#d6a026">G</i><i style="left:387px;background:#f9f0da;color:#d6a026">G</i><i style="left:397px;background:#dcf1e3;color:#27a35a">A</i><i style="left:407px;background:#fce1e1;color:#e65a5a">T</i><i style="left:417px;background:#fce1e1;color:#e65a5a">T</i><i style="left:427px;background:#e0e8fc;color:#3a6fe8">C</i><i style="left:437px;background:#f9f0da;color:#d6a026">G</i><i style="left:447px;background:#f9f0da;color:#d6a026">G</i><i style="left:457px;background:#dcf1e3;color:#27a35a">A</i><i style="left:467px;background:#dcf1e3;color:#27a35a">A</i><i style="left:477px;background:#dcf1e3;color:#27a35a">A</i><i style="left:487px;background:#fce1e1;color:#e65a5a">T</i><i style="left:497px;background:#fce1e1;color:#e65a5a">T</i><i style="left:507px;background:#f9f0da;color:#d6a026">G</i><i style="left:517px;background:#dcf1e3;color:#27a35a">A</i><i style="left:527px;background:#e0e8fc;color:#3a6fe8">C</i><i style="left:537px;background:#fce1e1;color:#e65a5a">T</i><i style="left:547px;background:#dcf1e3;color:#27a35a">A</i><i style="left:557px;background:#dcf1e3;color:#27a35a">A</i><i style="left:567px;background:#fce1e1;color:#e65a5a">T</i><i style="left:577px;background:#e0e8fc;color:#3a6fe8">C</i><i style="left:587px;background:#e0e8fc;color:#3a6fe8">C</i><i style="left:597px;background:#e0e8fc;color:#3a6fe8">C</i><i style="left:607px;background:#dcf1e3;color:#27a35a">A</i><i style="left:617px;background:#dcf1e3;color:#27a35a">A</i><i style="left:627px;background:#fce1e1;color:#e65a5a">T</i><i style="left:637px;background:#fce1e1;color:#e65a5a">T</i><i style="left:647px;background:#dcf1e3;color:#27a35a">A</i><i style="left:657px;background:#fce1e1;color:#e65a5a">T</i><i style="left:667px;background:#dcf1e3;color:#27a35a">A</i><i style="left:677px;background:#e0e8fc;color:#3a6fe8">C</i><i style="left:687px;background:#fce1e1;color:#e65a5a">T</i><i style="left:697px;background:#dcf1e3;color:#27a35a">A</i><i style="left:707px;background:#f9f0da;color:#d6a026">G</i><i style="left:717px;background:#f9f0da;color:#d6a026">G</i><i style="left:727px;background:#fce1e1;color:#e65a5a">T</i><i style="left:737px;background:#f9f0da;color:#d6a026">G</i><i style="left:747px;background:#e0e8fc;color:#3a6fe8">C</i></div>
<div class="ar sr" style="top:465px;height:23px"><i style="left:-3px;background:#fce1e1;color:#e65a5a">T</i><i style="left:7px;background:#fce1e1;color:#e65a5a">T</i><i style="left:17px;background:#dcf1e3;color:#27a35a">A</i><i style="left:27px;background:#fce1e1;color:#e65a5a">T</i><i style="left:37px;background:#dcf1e3;color:#27a35a">A</i><i style="left:47px;background:#dcf1e3;color:#27a35a">A</i><i style="left:57px;background:#fce1e1;color:#e65a5a">T</i><i style="left:67px;background:#fce1e1;color:#e65a5a">T</i><i style="left:77px;background:#fce1e1;color:#e65a5a">T</i><i style="left:87px;background:#fce1e1;color:#e65a5a">T</i><i style="left:97px;background:#fce1e1;color:#e65a5a">T</i><i style="left:107px;background:#fce1e1;color:#e65a5a">T</i><i style="left:117px;background:#fce1e1;color:#e65a5a">T</i><i style="left:127px;background:#e0e8fc;color:#3a6fe8">C</i><i style="left:137px;background:#dcf1e3;color:#27a35a">A</i><i style="left:147px;background:#fce1e1;color:#e65a5a">T</i><i style="left:157px;background:#dcf1e3;color:#27a35a">A</i><i style="left:167px;background:#f9f0da;color:#d6a026">G</i><i style="left:177px;background:#fce1e1;color:#e65a5a">T</i><i style="left:187px;background:#fce1e1;color:#e65a5a">T</i><i style="left:197px;background:#dcf1e3;color:#27a35a">A</i><i style="left:207px;background:#fce1e1;color:#e65a5a">T</i><i style="left:217px;background:#dcf1e3;color:#27a35a">A</i><i style="left:227px;background:#e0e8fc;color:#3a6fe8">C</i><i style="left:237px;background:#e0e8fc;color:#3a6fe8">C</i><i style="left:247px;background:#fce1e1;color:#e65a5a">T</i><i style="left:257px;background:#dcf1e3;color:#27a35a">A</i><i style="left:267px;background:#fce1e1;color:#e65a5a">T</i><i style="left:277px;background:#fce1e1;color:#e65a5a">T</i><i style="left:287px;background:#dcf1e3;color:#27a35a">A</i><i style="left:297px;background:#fce1e1;color:#e65a5a">T</i><i style="left:307px;background:#dcf1e3;color:#27a35a">A</i><i style="left:317px;background:#dcf1e3;color:#27a35a">A</i><i style="left:327px;background:#fce1e1;color:#e65a5a">T</i><i style="left:337px;background:#fce1e1;color:#e65a5a">T</i><i style="left:347px;background:#f9f0da;color:#d6a026">G</i><i style="left:357px;background:#f9f0da;color:#d6a026">G</i><i style="left:367px;background:#f9f0da;color:#d6a026">G</i><i style="left:377px;background:#f9f0da;color:#d6a026">G</i><i style="left:387px;background:#f9f0da;color:#d6a026">G</i><i style="left:397px;background:#dcf1e3;color:#27a35a">A</i><i style="left:407px;background:#fce1e1;color:#e65a5a">T</i><i style="left:417px;background:#fce1e1;color:#e65a5a">T</i><i style="left:427px;background:#fce1e1;color:#e65a5a">T</i><i style="left:437px;background:#f9f0da;color:#d6a026">G</i><i style="left:447px;background:#f9f0da;color:#d6a026">G</i><i style="left:457px;background:#dcf1e3;color:#27a35a">A</i><i style="left:467px;background:#dcf1e3;color:#27a35a">A</i><i style="left:477px;background:#dcf1e3;color:#27a35a">A</i><i style="left:487px;background:#fce1e1;color:#e65a5a">T</i><i style="left:497px;background:#fce1e1;color:#e65a5a">T</i><i style="left:507px;background:#f9f0da;color:#d6a026">G</i><i style="left:517px;background:#dcf1e3;color:#27a35a">A</i><i style="left:527px;background:#fce1e1;color:#e65a5a">T</i><i style="left:537px;background:#fce1e1;color:#e65a5a">T</i><i style="left:547px;background:#dcf1e3;color:#27a35a">A</i><i style="left:557px;background:#dcf1e3;color:#27a35a">A</i><i style="left:567px;background:#fce1e1;color:#e65a5a">T</i><i style="left:577px;background:#fce1e1;color:#e65a5a">T</i><i style="left:587px;background:#e0e8fc;color:#3a6fe8">C</i><i style="left:597px;background:#e0e8fc;color:#3a6fe8">C</i><i style="left:607px;background:#fce1e1;color:#e65a5a">T</i><i style="left:617px;background:#fce1e1;color:#e65a5a">T</i><i style="left:627px;background:#fce1e1;color:#e65a5a">T</i><i style="left:637px;background:#dcf1e3;color:#27a35a">A</i><i style="left:647px;background:#dcf1e3;color:#27a35a">A</i><i style="left:657px;background:#fce1e1;color:#e65a5a">T</i><i style="left:667px;background:#dcf1e3;color:#27a35a">A</i><i style="left:677px;background:#fce1e1;color:#e65a5a">T</i><i style="left:687px;background:#fce1e1;color:#e65a5a">T</i><i style="left:697px;background:#dcf1e3;color:#27a35a">A</i><i style="left:707px;background:#f9f0da;color:#d6a026">G</i><i style="left:717px;background:#f9f0da;color:#d6a026">G</i><i style="left:727px;background:#dcf1e3;color:#27a35a">A</i><i style="left:737px;background:#f9f0da;color:#d6a026">G</i><i style="left:747px;background:#e0e8fc;color:#3a6fe8">C</i></div>
<div class="ar sr" style="top:489px;height:23px"><i style="left:-3px;background:#fce1e1;color:#e65a5a">T</i><i style="left:7px;background:#fce1e1;color:#e65a5a">T</i><i style="left:17px;background:#dcf1e3;color:#27a35a">A</i><i style="left:27px;background:#fce1e1;color:#e65a5a">T</i><i style="left:37px;background:#dcf1e3;color:#27a35a">A</i><i style="left:47px;background:#dcf1e3;color:#27a35a">A</i><i style="left:57px;background:#fce1e1;color:#e65a5a">T</i><i style="left:67px;background:#fce1e1;color:#e65a5a">T</i><i style="left:77px;background:#fce1e1;color:#e65a5a">T</i><i style="left:87px;background:#fce1e1;color:#e65a5a">T</i><i style="left:97px;background:#fce1e1;color:#e65a5a">T</i><i style="left:107px;background:#fce1e1;color:#e65a5a">T</i><i style="left:117px;background:#fce1e1;color:#e65a5a">T</i><i style="left:127px;background:#fce1e1;color:#e65a5a">T</i><i style="left:137px;background:#dcf1e3;color:#27a35a">A</i><i style="left:147px;background:#fce1e1;color:#e65a5a">T</i><i style="left:157px;background:#dcf1e3;color:#27a35a">A</i><i style="left:167px;background:#f9f0da;color:#d6a026">G</i><i style="left:177px;background:#fce1e1;color:#e65a5a">T</i><i style="left:187px;background:#fce1e1;color:#e65a5a">T</i><i style="left:197px;background:#dcf1e3;color:#27a35a">A</i><i style="left:207px;background:#fce1e1;color:#e65a5a">T</i><i style="left:217px;background:#dcf1e3;color:#27a35a">A</i><i style="left:227px;background:#e0e8fc;color:#3a6fe8">C</i><i style="left:237px;background:#e0e8fc;color:#3a6fe8">C</i><i style="left:247px;background:#dcf1e3;color:#27a35a">A</i><i style="left:257px;background:#dcf1e3;color:#27a35a">A</i><i style="left:267px;background:#fce1e1;color:#e65a5a">T</i><i style="left:277px;background:#fce1e1;color:#e65a5a">T</i><i style="left:287px;background:#dcf1e3;color:#27a35a">A</i><i style="left:297px;background:#fce1e1;color:#e65a5a">T</i><i style="left:307px;background:#dcf1e3;color:#27a35a">A</i><i style="left:317px;background:#dcf1e3;color:#27a35a">A</i><i style="left:327px;background:#fce1e1;color:#e65a5a">T</i><i style="left:337px;background:#fce1e1;color:#e65a5a">T</i><i style="left:347px;background:#f9f0da;color:#d6a026">G</i><i style="left:357px;background:#f9f0da;color:#d6a026">G</i><i style="left:367px;background:#fce1e1;color:#e65a5a">T</i><i style="left:377px;background:#f9f0da;color:#d6a026">G</i><i style="left:387px;background:#f9f0da;color:#d6a026">G</i><i style="left:397px;background:#fce1e1;color:#e65a5a">T</i><i style="left:407px;background:#fce1e1;color:#e65a5a">T</i><i style="left:417px;background:#fce1e1;color:#e65a5a">T</i><i style="left:427px;background:#fce1e1;color:#e65a5a">T</i><i style="left:437px;background:#f9f0da;color:#d6a026">G</i><i style="left:447px;background:#f9f0da;color:#d6a026">G</i><i style="left:457px;background:#dcf1e3;color:#27a35a">A</i><i style="left:467px;background:#dcf1e3;color:#27a35a">A</i><i style="left:477px;background:#dcf1e3;color:#27a35a">A</i><i style="left:487px;background:#fce1e1;color:#e65a5a">T</i><i style="left:497px;background:#fce1e1;color:#e65a5a">T</i><i style="left:507px;background:#f9f0da;color:#d6a026">G</i><i style="left:517px;background:#dcf1e3;color:#27a35a">A</i><i style="left:527px;background:#fce1e1;color:#e65a5a">T</i><i style="left:537px;background:#fce1e1;color:#e65a5a">T</i><i style="left:547px;background:#dcf1e3;color:#27a35a">A</i><i style="left:557px;background:#f9f0da;color:#d6a026">G</i><i style="left:567px;background:#fce1e1;color:#e65a5a">T</i><i style="left:577px;background:#fce1e1;color:#e65a5a">T</i><i style="left:587px;background:#e0e8fc;color:#3a6fe8">C</i><i style="left:597px;background:#e0e8fc;color:#3a6fe8">C</i><i style="left:607px;background:#dcf1e3;color:#27a35a">A</i><i style="left:617px;background:#dcf1e3;color:#27a35a">A</i><i style="left:627px;background:#fce1e1;color:#e65a5a">T</i><i style="left:637px;background:#fce1e1;color:#e65a5a">T</i><i style="left:647px;background:#dcf1e3;color:#27a35a">A</i><i style="left:657px;background:#fce1e1;color:#e65a5a">T</i><i style="left:667px;background:#dcf1e3;color:#27a35a">A</i><i style="left:677px;background:#e0e8fc;color:#3a6fe8">C</i><i style="left:687px;background:#fce1e1;color:#e65a5a">T</i><i style="left:697px;background:#dcf1e3;color:#27a35a">A</i><i style="left:707px;background:#f9f0da;color:#d6a026">G</i><i style="left:717px;background:#f9f0da;color:#d6a026">G</i><i style="left:727px;background:#dcf1e3;color:#27a35a">A</i><i style="left:737px;background:#f9f0da;color:#d6a026">G</i><i style="left:747px;background:#e0e8fc;color:#3a6fe8">C</i></div>
<div class="ar sr" style="top:513px;height:23px"><i style="left:-3px;background:#fce1e1;color:#e65a5a">T</i><i style="left:7px;background:#fce1e1;color:#e65a5a">T</i><i style="left:17px;background:#dcf1e3;color:#27a35a">A</i><i style="left:27px;background:#fce1e1;color:#e65a5a">T</i><i style="left:37px;background:#dcf1e3;color:#27a35a">A</i><i style="left:47px;background:#dcf1e3;color:#27a35a">A</i><i style="left:57px;background:#fce1e1;color:#e65a5a">T</i><i style="left:67px;background:#fce1e1;color:#e65a5a">T</i><i style="left:77px;background:#fce1e1;color:#e65a5a">T</i><i style="left:87px;background:#fce1e1;color:#e65a5a">T</i><i style="left:97px;background:#fce1e1;color:#e65a5a">T</i><i style="left:107px;background:#fce1e1;color:#e65a5a">T</i><i style="left:117px;background:#fce1e1;color:#e65a5a">T</i><i style="left:127px;background:#fce1e1;color:#e65a5a">T</i><i style="left:137px;background:#dcf1e3;color:#27a35a">A</i><i style="left:147px;background:#fce1e1;color:#e65a5a">T</i><i style="left:157px;background:#dcf1e3;color:#27a35a">A</i><i style="left:167px;background:#f9f0da;color:#d6a026">G</i><i style="left:177px;background:#fce1e1;color:#e65a5a">T</i><i style="left:187px;background:#fce1e1;color:#e65a5a">T</i><i style="left:197px;background:#dcf1e3;color:#27a35a">A</i><i style="left:207px;background:#fce1e1;color:#e65a5a">T</i><i style="left:217px;background:#dcf1e3;color:#27a35a">A</i><i style="left:227px;background:#e0e8fc;color:#3a6fe8">C</i><i style="left:237px;background:#e0e8fc;color:#3a6fe8">C</i><i style="left:247px;background:#dcf1e3;color:#27a35a">A</i><i style="left:257px;background:#dcf1e3;color:#27a35a">A</i><i style="left:267px;background:#fce1e1;color:#e65a5a">T</i><i style="left:277px;background:#fce1e1;color:#e65a5a">T</i><i style="left:287px;background:#dcf1e3;color:#27a35a">A</i><i style="left:297px;background:#fce1e1;color:#e65a5a">T</i><i style="left:307px;background:#f9f0da;color:#d6a026">G</i><i style="left:317px;background:#dcf1e3;color:#27a35a">A</i><i style="left:327px;background:#fce1e1;color:#e65a5a">T</i><i style="left:337px;background:#fce1e1;color:#e65a5a">T</i><i style="left:347px;background:#f9f0da;color:#d6a026">G</i><i style="left:357px;background:#f9f0da;color:#d6a026">G</i><i style="left:367px;background:#dcf1e3;color:#27a35a">A</i><i style="left:377px;background:#f9f0da;color:#d6a026">G</i><i style="left:387px;background:#f9f0da;color:#d6a026">G</i><i style="left:397px;background:#dcf1e3;color:#27a35a">A</i><i style="left:407px;background:#fce1e1;color:#e65a5a">T</i><i style="left:417px;background:#fce1e1;color:#e65a5a">T</i><i style="left:427px;background:#fce1e1;color:#e65a5a">T</i><i style="left:437px;background:#f9f0da;color:#d6a026">G</i><i style="left:447px;background:#f9f0da;color:#d6a026">G</i><i style="left:457px;background:#dcf1e3;color:#27a35a">A</i><i style="left:467px;background:#dcf1e3;color:#27a35a">A</i><i style="left:477px;background:#dcf1e3;color:#27a35a">A</i><i style="left:487px;background:#fce1e1;color:#e65a5a">T</i><i style="left:497px;background:#fce1e1;color:#e65a5a">T</i><i style="left:507px;background:#f9f0da;color:#d6a026">G</i><i style="left:517px;background:#dcf1e3;color:#27a35a">A</i><i style="left:527px;background:#e0e8fc;color:#3a6fe8">C</i><i style="left:537px;background:#fce1e1;color:#e65a5a">T</i><i style="left:547px;background:#fce1e1;color:#e65a5a">T</i><i style="left:557px;background:#f9f0da;color:#d6a026">G</i><i style="left:567px;background:#fce1e1;color:#e65a5a">T</i><i style="left:577px;background:#fce1e1;color:#e65a5a">T</i><i style="left:587px;background:#e0e8fc;color:#3a6fe8">C</i><i style="left:597px;background:#e0e8fc;color:#3a6fe8">C</i><i style="left:607px;background:#dcf1e3;color:#27a35a">A</i><i style="left:617px;background:#dcf1e3;color:#27a35a">A</i><i style="left:627px;background:#fce1e1;color:#e65a5a">T</i><i style="left:637px;background:#fce1e1;color:#e65a5a">T</i><i style="left:647px;background:#dcf1e3;color:#27a35a">A</i><i style="left:657px;background:#fce1e1;color:#e65a5a">T</i><i style="left:667px;background:#dcf1e3;color:#27a35a">A</i><i style="left:677px;background:#fce1e1;color:#e65a5a">T</i><i style="left:687px;background:#fce1e1;color:#e65a5a">T</i><i style="left:697px;background:#dcf1e3;color:#27a35a">A</i><i style="left:707px;background:#f9f0da;color:#d6a026">G</i><i style="left:717px;background:#f9f0da;color:#d6a026">G</i><i style="left:727px;background:#dcf1e3;color:#27a35a">A</i><i style="left:737px;background:#f9f0da;color:#d6a026">G</i><i style="left:747px;background:#e0e8fc;color:#3a6fe8">C</i></div>
<div class="ar sr" style="top:537px;height:23px"><i style="left:-3px;background:#fce1e1;color:#e65a5a">T</i><i style="left:7px;background:#fce1e1;color:#e65a5a">T</i><i style="left:17px;background:#dcf1e3;color:#27a35a">A</i><i style="left:27px;background:#fce1e1;color:#e65a5a">T</i><i style="left:37px;background:#dcf1e3;color:#27a35a">A</i><i style="left:47px;background:#dcf1e3;color:#27a35a">A</i><i style="left:57px;background:#fce1e1;color:#e65a5a">T</i><i style="left:67px;background:#fce1e1;color:#e65a5a">T</i><i style="left:77px;background:#fce1e1;color:#e65a5a">T</i><i style="left:87px;background:#fce1e1;color:#e65a5a">T</i><i style="left:97px;background:#fce1e1;color:#e65a5a">T</i><i style="left:107px;background:#fce1e1;color:#e65a5a">T</i><i style="left:117px;background:#fce1e1;color:#e65a5a">T</i><i style="left:127px;background:#e0e8fc;color:#3a6fe8">C</i><i style="left:137px;background:#dcf1e3;color:#27a35a">A</i><i style="left:147px;background:#fce1e1;color:#e65a5a">T</i><i style="left:157px;background:#dcf1e3;color:#27a35a">A</i><i style="left:167px;background:#f9f0da;color:#d6a026">G</i><i style="left:177px;background:#fce1e1;color:#e65a5a">T</i><i style="left:187px;background:#fce1e1;color:#e65a5a">T</i><i style="left:197px;background:#dcf1e3;color:#27a35a">A</i><i style="left:207px;background:#fce1e1;color:#e65a5a">T</i><i style="left:217px;background:#dcf1e3;color:#27a35a">A</i><i style="left:227px;background:#e0e8fc;color:#3a6fe8">C</i><i style="left:237px;background:#e0e8fc;color:#3a6fe8">C</i><i style="left:247px;background:#e0e8fc;color:#3a6fe8">C</i><i style="left:257px;background:#dcf1e3;color:#27a35a">A</i><i style="left:267px;background:#fce1e1;color:#e65a5a">T</i><i style="left:277px;background:#fce1e1;color:#e65a5a">T</i><i style="left:287px;background:#dcf1e3;color:#27a35a">A</i><i style="left:297px;background:#fce1e1;color:#e65a5a">T</i><i style="left:307px;background:#dcf1e3;color:#27a35a">A</i><i style="left:317px;background:#dcf1e3;color:#27a35a">A</i><i style="left:327px;background:#fce1e1;color:#e65a5a">T</i><i style="left:337px;background:#fce1e1;color:#e65a5a">T</i><i style="left:347px;background:#f9f0da;color:#d6a026">G</i><i style="left:357px;background:#f9f0da;color:#d6a026">G</i><i style="left:367px;background:#f9f0da;color:#d6a026">G</i><i style="left:377px;background:#f9f0da;color:#d6a026">G</i><i style="left:387px;background:#f9f0da;color:#d6a026">G</i><i style="left:397px;background:#dcf1e3;color:#27a35a">A</i><i style="left:407px;background:#fce1e1;color:#e65a5a">T</i><i style="left:417px;background:#fce1e1;color:#e65a5a">T</i><i style="left:427px;background:#fce1e1;color:#e65a5a">T</i><i style="left:437px;background:#f9f0da;color:#d6a026">G</i><i style="left:447px;background:#f9f0da;color:#d6a026">G</i><i style="left:457px;background:#dcf1e3;color:#27a35a">A</i><i style="left:467px;background:#dcf1e3;color:#27a35a">A</i><i style="left:477px;background:#dcf1e3;color:#27a35a">A</i><i style="left:487px;background:#fce1e1;color:#e65a5a">T</i><i style="left:497px;background:#fce1e1;color:#e65a5a">T</i><i style="left:507px;background:#f9f0da;color:#d6a026">G</i><i style="left:517px;background:#dcf1e3;color:#27a35a">A</i><i style="left:527px;background:#fce1e1;color:#e65a5a">T</i><i style="left:537px;background:#fce1e1;color:#e65a5a">T</i><i style="left:547px;background:#dcf1e3;color:#27a35a">A</i><i style="left:557px;background:#f9f0da;color:#d6a026">G</i><i style="left:567px;background:#fce1e1;color:#e65a5a">T</i><i style="left:577px;background:#dcf1e3;color:#27a35a">A</i><i style="left:587px;background:#e0e8fc;color:#3a6fe8">C</i><i style="left:597px;background:#e0e8fc;color:#3a6fe8">C</i><i style="left:607px;background:#dcf1e3;color:#27a35a">A</i><i style="left:617px;background:#dcf1e3;color:#27a35a">A</i><i style="left:627px;background:#fce1e1;color:#e65a5a">T</i><i style="left:637px;background:#fce1e1;color:#e65a5a">T</i><i style="left:647px;background:#dcf1e3;color:#27a35a">A</i><i style="left:657px;background:#fce1e1;color:#e65a5a">T</i><i style="left:667px;background:#dcf1e3;color:#27a35a">A</i><i style="left:677px;background:#fce1e1;color:#e65a5a">T</i><i style="left:687px;background:#fce1e1;color:#e65a5a">T</i><i style="left:697px;background:#f9f0da;color:#d6a026">G</i><i style="left:707px;background:#f9f0da;color:#d6a026">G</i><i style="left:717px;background:#f9f0da;color:#d6a026">G</i><i style="left:727px;background:#dcf1e3;color:#27a35a">A</i><i style="left:737px;background:#f9f0da;color:#d6a026">G</i><i style="left:747px;background:#e0e8fc;color:#3a6fe8">C</i></div>
<div class="ar sr" style="top:561px;height:23px"><i style="left:-3px;background:#fce1e1;color:#e65a5a">T</i><i style="left:7px;background:#fce1e1;color:#e65a5a">T</i><i style="left:17px;background:#dcf1e3;color:#27a35a">A</i><i style="left:27px;background:#fce1e1;color:#e65a5a">T</i><i style="left:37px;background:#dcf1e3;color:#27a35a">A</i><i style="left:47px;background:#dcf1e3;color:#27a35a">A</i><i style="left:57px;background:#fce1e1;color:#e65a5a">T</i><i style="left:67px;background:#fce1e1;color:#e65a5a">T</i><i style="left:77px;background:#fce1e1;color:#e65a5a">T</i><i style="left:87px;background:#fce1e1;color:#e65a5a">T</i><i style="left:97px;background:#fce1e1;color:#e65a5a">T</i><i style="left:107px;background:#fce1e1;color:#e65a5a">T</i><i style="left:117px;background:#fce1e1;color:#e65a5a">T</i><i style="left:127px;background:#e0e8fc;color:#3a6fe8">C</i><i style="left:137px;background:#dcf1e3;color:#27a35a">A</i><i style="left:147px;background:#fce1e1;color:#e65a5a">T</i><i style="left:157px;background:#dcf1e3;color:#27a35a">A</i><i style="left:167px;background:#f9f0da;color:#d6a026">G</i><i style="left:177px;background:#fce1e1;color:#e65a5a">T</i><i style="left:187px;background:#fce1e1;color:#e65a5a">T</i><i style="left:197px;background:#dcf1e3;color:#27a35a">A</i><i style="left:207px;background:#fce1e1;color:#e65a5a">T</i><i style="left:217px;background:#dcf1e3;color:#27a35a">A</i><i style="left:227px;background:#e0e8fc;color:#3a6fe8">C</i><i style="left:237px;background:#e0e8fc;color:#3a6fe8">C</i><i style="left:247px;background:#dcf1e3;color:#27a35a">A</i><i style="left:257px;background:#dcf1e3;color:#27a35a">A</i><i style="left:267px;background:#fce1e1;color:#e65a5a">T</i><i style="left:277px;background:#fce1e1;color:#e65a5a">T</i><i style="left:287px;background:#dcf1e3;color:#27a35a">A</i><i style="left:297px;background:#fce1e1;color:#e65a5a">T</i><i style="left:307px;background:#dcf1e3;color:#27a35a">A</i><i style="left:317px;background:#dcf1e3;color:#27a35a">A</i><i style="left:327px;background:#fce1e1;color:#e65a5a">T</i><i style="left:337px;background:#fce1e1;color:#e65a5a">T</i><i style="left:347px;background:#f9f0da;color:#d6a026">G</i><i style="left:357px;background:#f9f0da;color:#d6a026">G</i><i style="left:367px;background:#fce1e1;color:#e65a5a">T</i><i style="left:377px;background:#f9f0da;color:#d6a026">G</i><i style="left:387px;background:#f9f0da;color:#d6a026">G</i><i style="left:397px;background:#dcf1e3;color:#27a35a">A</i><i style="left:407px;background:#fce1e1;color:#e65a5a">T</i><i style="left:417px;background:#fce1e1;color:#e65a5a">T</i><i style="left:427px;background:#fce1e1;color:#e65a5a">T</i><i style="left:437px;background:#f9f0da;color:#d6a026">G</i><i style="left:447px;background:#f9f0da;color:#d6a026">G</i><i style="left:457px;background:#dcf1e3;color:#27a35a">A</i><i style="left:467px;background:#dcf1e3;color:#27a35a">A</i><i style="left:477px;background:#dcf1e3;color:#27a35a">A</i><i style="left:487px;background:#e0e8fc;color:#3a6fe8">C</i><i style="left:497px;background:#fce1e1;color:#e65a5a">T</i><i style="left:507px;background:#f9f0da;color:#d6a026">G</i><i style="left:517px;background:#dcf1e3;color:#27a35a">A</i><i style="left:527px;background:#e0e8fc;color:#3a6fe8">C</i><i style="left:537px;background:#fce1e1;color:#e65a5a">T</i><i style="left:547px;background:#dcf1e3;color:#27a35a">A</i><i style="left:557px;background:#f9f0da;color:#d6a026">G</i><i style="left:567px;background:#fce1e1;color:#e65a5a">T</i><i style="left:577px;background:#fce1e1;color:#e65a5a">T</i><i style="left:587px;background:#e0e8fc;color:#3a6fe8">C</i><i style="left:597px;background:#e0e8fc;color:#3a6fe8">C</i><i style="left:607px;background:#dcf1e3;color:#27a35a">A</i><i style="left:617px;background:#dcf1e3;color:#27a35a">A</i><i style="left:627px;background:#fce1e1;color:#e65a5a">T</i><i style="left:637px;background:#e0e8fc;color:#3a6fe8">C</i><i style="left:647px;background:#dcf1e3;color:#27a35a">A</i><i style="left:657px;background:#fce1e1;color:#e65a5a">T</i><i style="left:667px;background:#dcf1e3;color:#27a35a">A</i><i style="left:677px;background:#e0e8fc;color:#3a6fe8">C</i><i style="left:687px;background:#fce1e1;color:#e65a5a">T</i><i style="left:697px;background:#dcf1e3;color:#27a35a">A</i><i style="left:707px;background:#f9f0da;color:#d6a026">G</i><i style="left:717px;background:#f9f0da;color:#d6a026">G</i><i style="left:727px;background:#fce1e1;color:#e65a5a">T</i><i style="left:737px;background:#f9f0da;color:#d6a026">G</i><i style="left:747px;background:#e0e8fc;color:#3a6fe8">C</i></div>
<div class="ar sr" style="top:585px;height:23px"><i style="left:-3px;background:#fce1e1;color:#e65a5a">T</i><i style="left:7px;background:#fce1e1;color:#e65a5a">T</i><i style="left:17px;background:#dcf1e3;color:#27a35a">A</i><i style="left:27px;background:#fce1e1;color:#e65a5a">T</i><i style="left:37px;background:#dcf1e3;color:#27a35a">A</i><i style="left:47px;background:#dcf1e3;color:#27a35a">A</i><i style="left:57px;background:#fce1e1;color:#e65a5a">T</i><i style="left:67px;background:#fce1e1;color:#e65a5a">T</i><i style="left:77px;background:#fce1e1;color:#e65a5a">T</i><i style="left:87px;background:#fce1e1;color:#e65a5a">T</i><i style="left:97px;background:#fce1e1;color:#e65a5a">T</i><i style="left:107px;background:#fce1e1;color:#e65a5a">T</i><i style="left:117px;background:#fce1e1;color:#e65a5a">T</i><i style="left:127px;background:#e0e8fc;color:#3a6fe8">C</i><i style="left:137px;background:#dcf1e3;color:#27a35a">A</i><i style="left:147px;background:#fce1e1;color:#e65a5a">T</i><i style="left:157px;background:#dcf1e3;color:#27a35a">A</i><i style="left:167px;background:#f9f0da;color:#d6a026">G</i><i style="left:177px;background:#fce1e1;color:#e65a5a">T</i><i style="left:187px;background:#fce1e1;color:#e65a5a">T</i><i style="left:197px;background:#dcf1e3;color:#27a35a">A</i><i style="left:207px;background:#fce1e1;color:#e65a5a">T</i><i style="left:217px;background:#dcf1e3;color:#27a35a">A</i><i style="left:227px;background:#e0e8fc;color:#3a6fe8">C</i><i style="left:237px;background:#e0e8fc;color:#3a6fe8">C</i><i style="left:247px;background:#dcf1e3;color:#27a35a">A</i><i style="left:257px;background:#dcf1e3;color:#27a35a">A</i><i style="left:267px;background:#fce1e1;color:#e65a5a">T</i><i style="left:277px;background:#fce1e1;color:#e65a5a">T</i><i style="left:287px;background:#dcf1e3;color:#27a35a">A</i><i style="left:297px;background:#fce1e1;color:#e65a5a">T</i><i style="left:307px;background:#dcf1e3;color:#27a35a">A</i><i style="left:317px;background:#dcf1e3;color:#27a35a">A</i><i style="left:327px;background:#fce1e1;color:#e65a5a">T</i><i style="left:337px;background:#fce1e1;color:#e65a5a">T</i><i style="left:347px;background:#f9f0da;color:#d6a026">G</i><i style="left:357px;background:#f9f0da;color:#d6a026">G</i><i style="left:367px;background:#fce1e1;color:#e65a5a">T</i><i style="left:377px;background:#f9f0da;color:#d6a026">G</i><i style="left:387px;background:#f9f0da;color:#d6a026">G</i><i style="left:397px;background:#dcf1e3;color:#27a35a">A</i><i style="left:407px;background:#fce1e1;color:#e65a5a">T</i><i style="left:417px;background:#fce1e1;color:#e65a5a">T</i><i style="left:427px;background:#fce1e1;color:#e65a5a">T</i><i style="left:437px;background:#f9f0da;color:#d6a026">G</i><i style="left:447px;background:#f9f0da;color:#d6a026">G</i><i style="left:457px;background:#fce1e1;color:#e65a5a">T</i><i style="left:467px;background:#dcf1e3;color:#27a35a">A</i><i style="left:477px;background:#dcf1e3;color:#27a35a">A</i><i style="left:487px;background:#fce1e1;color:#e65a5a">T</i><i style="left:497px;background:#fce1e1;color:#e65a5a">T</i><i style="left:507px;background:#f9f0da;color:#d6a026">G</i><i style="left:517px;background:#f9f0da;color:#d6a026">G</i><i style="left:527px;background:#fce1e1;color:#e65a5a">T</i><i style="left:537px;background:#fce1e1;color:#e65a5a">T</i><i style="left:547px;background:#f9f0da;color:#d6a026">G</i><i style="left:557px;background:#dcf1e3;color:#27a35a">A</i><i style="left:567px;background:#fce1e1;color:#e65a5a">T</i><i style="left:577px;background:#fce1e1;color:#e65a5a">T</i><i style="left:587px;background:#e0e8fc;color:#3a6fe8">C</i><i style="left:597px;background:#e0e8fc;color:#3a6fe8">C</i><i style="left:607px;background:#e0e8fc;color:#3a6fe8">C</i><i style="left:617px;background:#dcf1e3;color:#27a35a">A</i><i style="left:627px;background:#fce1e1;color:#e65a5a">T</i><i style="left:637px;background:#fce1e1;color:#e65a5a">T</i><i style="left:647px;background:#dcf1e3;color:#27a35a">A</i><i style="left:657px;background:#fce1e1;color:#e65a5a">T</i><i style="left:667px;background:#dcf1e3;color:#27a35a">A</i><i style="left:677px;background:#fce1e1;color:#e65a5a">T</i><i style="left:687px;background:#fce1e1;color:#e65a5a">T</i><i style="left:697px;background:#dcf1e3;color:#27a35a">A</i><i style="left:707px;background:#f9f0da;color:#d6a026">G</i><i style="left:717px;background:#f9f0da;color:#d6a026">G</i><i style="left:727px;background:#f9f0da;color:#d6a026">G</i><i style="left:737px;background:#f9f0da;color:#d6a026">G</i><i style="left:747px;background:#e0e8fc;color:#3a6fe8">C</i></div>
<div class="ar sr" style="top:609px;height:23px"><i style="left:-3px;background:#fce1e1;color:#e65a5a">T</i><i style="left:7px;background:#fce1e1;color:#e65a5a">T</i><i style="left:17px;background:#dcf1e3;color:#27a35a">A</i><i style="left:27px;background:#fce1e1;color:#e65a5a">T</i><i style="left:37px;background:#dcf1e3;color:#27a35a">A</i><i style="left:47px;background:#dcf1e3;color:#27a35a">A</i><i style="left:57px;background:#fce1e1;color:#e65a5a">T</i><i style="left:67px;background:#fce1e1;color:#e65a5a">T</i><i style="left:77px;background:#fce1e1;color:#e65a5a">T</i><i style="left:87px;background:#fce1e1;color:#e65a5a">T</i><i style="left:97px;background:#e0e8fc;color:#3a6fe8">C</i><i style="left:107px;background:#fce1e1;color:#e65a5a">T</i><i style="left:117px;background:#fce1e1;color:#e65a5a">T</i><i style="left:127px;background:#fce1e1;color:#e65a5a">T</i><i style="left:137px;background:#dcf1e3;color:#27a35a">A</i><i style="left:147px;background:#fce1e1;color:#e65a5a">T</i><i style="left:157px;background:#f9f0da;color:#d6a026">G</i><i style="left:167px;background:#f9f0da;color:#d6a026">G</i><i style="left:177px;background:#fce1e1;color:#e65a5a">T</i><i style="left:187px;background:#fce1e1;color:#e65a5a">T</i><i style="left:197px;background:#dcf1e3;color:#27a35a">A</i><i style="left:207px;background:#fce1e1;color:#e65a5a">T</i><i style="left:217px;background:#f9f0da;color:#d6a026">G</i><i style="left:227px;background:#e0e8fc;color:#3a6fe8">C</i><i style="left:237px;background:#e0e8fc;color:#3a6fe8">C</i><i style="left:247px;background:#e0e8fc;color:#3a6fe8">C</i><i style="left:257px;background:#dcf1e3;color:#27a35a">A</i><i style="left:267px;background:#fce1e1;color:#e65a5a">T</i><i style="left:277px;background:#e0e8fc;color:#3a6fe8">C</i><i style="left:287px;background:#dcf1e3;color:#27a35a">A</i><i style="left:297px;background:#fce1e1;color:#e65a5a">T</i><i style="left:307px;background:#dcf1e3;color:#27a35a">A</i><i style="left:317px;background:#dcf1e3;color:#27a35a">A</i><i style="left:327px;background:#fce1e1;color:#e65a5a">T</i><i style="left:337px;background:#fce1e1;color:#e65a5a">T</i><i style="left:347px;background:#f9f0da;color:#d6a026">G</i><i style="left:357px;background:#f9f0da;color:#d6a026">G</i><i style="left:367px;background:#dcf1e3;color:#27a35a">A</i><i style="left:377px;background:#f9f0da;color:#d6a026">G</i><i style="left:387px;background:#f9f0da;color:#d6a026">G</i><i style="left:397px;background:#fce1e1;color:#e65a5a">T</i><i style="left:407px;background:#fce1e1;color:#e65a5a">T</i><i style="left:417px;background:#fce1e1;color:#e65a5a">T</i><i style="left:427px;background:#fce1e1;color:#e65a5a">T</i><i style="left:437px;background:#f9f0da;color:#d6a026">G</i><i style="left:447px;background:#f9f0da;color:#d6a026">G</i><i style="left:457px;background:#e0e8fc;color:#3a6fe8">C</i><i style="left:467px;background:#dcf1e3;color:#27a35a">A</i><i style="left:477px;background:#dcf1e3;color:#27a35a">A</i><i style="left:487px;background:#fce1e1;color:#e65a5a">T</i><i style="left:497px;background:#fce1e1;color:#e65a5a">T</i><i style="left:507px;background:#f9f0da;color:#d6a026">G</i><i style="left:517px;background:#dcf1e3;color:#27a35a">A</i><i style="left:527px;background:#fce1e1;color:#e65a5a">T</i><i style="left:537px;background:#fce1e1;color:#e65a5a">T</i><i style="left:547px;background:#f9f0da;color:#d6a026">G</i><i style="left:557px;background:#f9f0da;color:#d6a026">G</i><i style="left:567px;background:#fce1e1;color:#e65a5a">T</i><i style="left:577px;background:#e0e8fc;color:#3a6fe8">C</i><i style="left:587px;background:#e0e8fc;color:#3a6fe8">C</i><i style="left:597px;background:#e0e8fc;color:#3a6fe8">C</i><i style="left:607px;background:#e0e8fc;color:#3a6fe8">C</i><i style="left:617px;background:#dcf1e3;color:#27a35a">A</i><i style="left:627px;background:#fce1e1;color:#e65a5a">T</i><i style="left:637px;background:#fce1e1;color:#e65a5a">T</i><i style="left:647px;background:#dcf1e3;color:#27a35a">A</i><i style="left:657px;background:#fce1e1;color:#e65a5a">T</i><i style="left:667px;background:#dcf1e3;color:#27a35a">A</i><i style="left:677px;background:#fce1e1;color:#e65a5a">T</i><i style="left:687px;background:#fce1e1;color:#e65a5a">T</i><i style="left:697px;background:#dcf1e3;color:#27a35a">A</i><i style="left:707px;background:#f9f0da;color:#d6a026">G</i><i style="left:717px;background:#f9f0da;color:#d6a026">G</i><i style="left:727px;background:#f9f0da;color:#d6a026">G</i><i style="left:737px;background:#f9f0da;color:#d6a026">G</i><i style="left:747px;background:#e0e8fc;color:#3a6fe8">C</i></div>
<div class="cb" style="top:333px;height:15px"><b style="left:-3px;width:10px;top:0;background:#22c55e"></b><b style="left:7px;width:10px;top:2px;background:#84cc16"></b><b style="left:17px;width:80px;top:0;background:#22c55e"></b><b style="left:97px;width:10px;top:4px;background:#eab308"></b><b style="left:107px;width:20px;top:0;background:#22c55e"></b><b style="left:127px;width:10px;top:3px;background:#84cc16"></b><b style="left:137px;width:50px;top:0;background:#22c55e"></b><b style="left:187px;width:10px;top:5px;background:#eab308"></b><b style="left:197px;width:20px;top:0;background:#22c55e"></b><b style="left:217px;width:10px;top:1px;background:#84cc16"></b><b style="left:227px;width:20px;top:0;background:#22c55e"></b><b style="left:247px;width:10px;top:7px;background:#eab308"></b><b style="left:257px;width:10px;top:2px;background:#84cc16"></b><b style="left:267px;width:10px;top:0;background:#22c55e"></b><b style="left:277px;width:10px;top:4px;background:#eab308"></b><b style="left:287px;width:50px;top:0;background:#22c55e"></b><b style="left:337px;width:10px;top:1px;background:#84cc16"></b><b style="left:347px;width:20px;top:0;background:#22c55e"></b><b style="left:367px;width:10px;top:8px;background:#f97316"></b><b style="left:377px;width:20px;top:0;background:#22c55e"></b><b style="left:397px;width:10px;top:6px;background:#eab308"></b><b style="left:407px;width:20px;top:0;background:#22c55e"></b><b style="left:427px;width:10px;top:2px;background:#84cc16"></b><b style="left:437px;width:20px;top:0;background:#22c55e"></b><b style="left:457px;width:10px;top:3px;background:#84cc16"></b><b style="left:467px;width:20px;top:0;background:#22c55e"></b><b style="left:487px;width:10px;top:3px;background:#84cc16"></b><b style="left:497px;width:20px;top:0;background:#22c55e"></b><b style="left:517px;width:10px;top:2px;background:#84cc16"></b><b style="left:527px;width:10px;top:6px;background:#eab308"></b><b style="left:537px;width:10px;top:0;background:#22c55e"></b><b style="left:547px;width:10px;top:3px;background:#84cc16"></b><b style="left:557px;width:10px;top:5px;background:#eab308"></b><b style="left:567px;width:10px;top:0;background:#22c55e"></b><b style="left:577px;width:10px;top:7px;background:#eab308"></b><b style="left:587px;width:20px;top:0;background:#22c55e"></b><b style="left:607px;width:10px;top:8px;background:#f97316"></b><b style="left:617px;width:10px;top:3px;background:#84cc16"></b><b style="left:627px;width:10px;top:0;background:#22c55e"></b><b style="left:637px;width:10px;top:6px;background:#eab308"></b><b style="left:647px;width:30px;top:0;background:#22c55e"></b><b style="left:677px;width:10px;top:6px;background:#eab308"></b><b style="left:687px;width:10px;top:0;background:#22c55e"></b><b style="left:697px;width:10px;top:2px;background:#84cc16"></b><b style="left:707px;width:20px;top:0;background:#22c55e"></b><b style="left:727px;width:10px;top:7px;background:#eab308"></b><b style="left:737px;width:10px;top:2px;background:#84cc16"></b><b style="left:747px;width:10px;top:0;background:#22c55e"></b></div></div>
<div class="box" style="left:432px;top:332px;width:755px;height:1px;background:#e5e7eb"></div>
<div class="box" style="left:1187px;top:309px;width:15px;height:317px;background:#fff"></div>
<svg class="ic" style="left:1189.5px;top:314px;" width="10" height="7" viewBox="0 0 10 7"><path d="M0.5 6.5L5 0.5L9.5 6.5Z" fill="#6b6b6b"/></svg>
<div class="box" style="left:1190px;top:332px;width:9px;height:17px;border-radius:5px;background:#8a8a8a"></div>
<svg class="ic" style="left:1189px;top:613px;" width="10" height="7" viewBox="0 0 10 7"><path d="M0.5 0.5L5 6.5L9.5 0.5Z" fill="#6b6b6b"/></svg>
<div class="box" style="left:282px;top:626px;width:921px;height:15px;background:#fdfdfd"></div>
<svg class="ic" style="left:286px;top:629px;" width="7" height="10" viewBox="0 0 7 10"><path d="M6.5 0.5L0.5 5L6.5 9.5Z" fill="#6b6b6b"/></svg>
<div class="box" style="left:433px;top:629px;width:48px;height:9px;border-radius:5px;background:#8a8a8a"></div>
<svg class="ic" style="left:1175px;top:629px;" width="7" height="10" viewBox="0 0 7 10"><path d="M0.5 0.5L6.5 5L0.5 9.5Z" fill="#6b6b6b"/></svg>
<div class="box" style="left:282px;top:641px;width:921px;height:27px;background:#f4f4f5;border-top:1px solid #e4e4e7"></div>
<div class="box" style="left:1203px;top:210px;width:224px;height:459px;background:#f8fafc;border-left:1px solid #e2e8f0"></div>
<div class="box" style="left:1204px;top:256px;width:223px;height:1px;background:#e2e8f0"></div>
<div class="box" style="left:1204px;top:295px;width:223px;height:1px;background:#e2e8f0"></div>
<div class="box" style="left:1247px;top:221.5px;width:22.5px;height:21.5px;border:1px solid #d1d5db;border-radius:4px;background:#fff"></div>
<div class="box" style="left:1328px;top:221.5px;width:22.5px;height:21.5px;border:1px solid #d1d5db;border-radius:4px;background:#fff"></div>
<div class="box" style="left:1359px;top:221.5px;width:23.5px;height:21.5px;border:1px solid #d1d5db;border-radius:4px;background:#fff"></div>
<div class="box" style="left:1256px;top:233.5px;width:7px;height:1.2px;background:#374151"></div>
<svg class="ic" style="left:1333.6px;top:228.3px;" width="12" height="12" viewBox="0 0 12 12"><path d="M6 2.4V9.6M2.4 6H9.6" stroke="#374151" stroke-width="1.15"/></svg>
<svg class="ic" style="left:1365px;top:228px;" width="14" height="14" viewBox="0 0 14 14"><circle cx="7" cy="7" r="4.3" fill="none" stroke="#374151" stroke-width="1.1"/><circle cx="7" cy="7" r="1" fill="#374151"/></svg>
<div class="box" style="left:1218px;top:363px;width:193px;height:38px;border:1px solid #cbd5e1;border-radius:6px;background:#fff"></div>
<svg class="ic" style="left:1388.8px;top:379.6px" width="13.2" height="8" viewBox="-1 -1 13.2 8"><path d="M0 0L5.6 6L11.2 0" fill="none" stroke="#374151" stroke-width="1.4" stroke-linecap="round" stroke-linejoin="round"/></svg>
<div class="box" style="left:1218.5px;top:480.5px;width:191px;height:7px;border:1px solid #d4d4d8;border-radius:5px;background:#efefef"></div>
<div class="box" style="left:1218.5px;top:480.5px;width:98px;height:9px;border-radius:5px;background:#6366f1"></div>
<div class="box" style="left:1309px;top:477.5px;width:14.5px;height:14.5px;border-radius:50%;background:#6366f1"></div>
<div class="box" style="left:1427px;top:210px;width:1px;height:459px;background:#e2e8f0"></div>
<div class="box" style="left:1428px;top:210px;width:41px;height:459px;background:#f3f6fa"></div>
<svg class="ic" style="left:1441px;top:229px;" width="16" height="16" viewBox="0 0 16 16"><path d="M2 14L2.5 11.3L10.9 2.9C11.6 2.2 12.7 2.2 13.3 2.9C14 3.5 14 4.6 13.3 5.3L4.9 13.7Z" fill="none" stroke="#6366f1" stroke-width="1.2" stroke-linejoin="round"/></svg>
<div class="box" style="left:1434px;top:263px;width:29px;height:1px;background:#d6dae0"></div>
<svg class="ic" style="left:1441.5px;top:282.5px;" width="14" height="14" viewBox="0 0 14 14"><g transform="translate(0.9 0.9) scale(0.87)"><circle cx="7" cy="7" r="2" fill="none" stroke="#475569" stroke-width="1.2"/><path d="M6 1H8L8.4 2.6L9.6 3.1L11 2.2L12.4 3.6L11.5 5L12 6.2L13.5 6.6V8.4L12 8.8L11.5 10L12.4 11.4L11 12.8L9.6 11.9L8.4 12.4L8 14H6L5.6 12.4L4.4 11.9L3 12.8L1.6 11.4L2.5 10L2 8.8L0.5 8.4V6.6L2 6.2L2.5 5L1.6 3.6L3 2.2L4.4 3.1L5.6 2.6Z" fill="none" stroke="#475569" stroke-width="1.15" stroke-linejoin="round"/></g></svg>
<svg class="ic" style="left:1441px;top:319px;" width="15" height="11" viewBox="0 0 15 11"><path d="M1 5.5C2.8 2.5 5 1 7.5 1C10 1 12.2 2.5 14 5.5C12.2 8.5 10 10 7.5 10C5 10 2.8 8.5 1 5.5Z" fill="none" stroke="#6366f1" stroke-width="1.3"/><circle cx="7.5" cy="5.5" r="2" fill="none" stroke="#6366f1" stroke-width="1.3"/></svg>
<svg class="ic" style="left:1441.5px;top:353px;" width="15" height="14" viewBox="0 0 15 14"><path d="M1 2.5H7M4 1V2.5M6 2.5C5.5 5 3.5 7 1.2 8M3 4.8C4 6.3 5.2 7.3 6.8 7.8M7.5 13L10 6.5L12.5 13M8.4 11H11.6" fill="none" stroke="#475569" stroke-width="1.1" stroke-linecap="round" stroke-linejoin="round"/></svg>
<svg class="ic" style="left:1443px;top:388.5px;" width="11" height="13" viewBox="0 0 11 13"><path d="M1.2 1H9.8V12L5.5 8.8L1.2 12Z" fill="none" stroke="#475569" stroke-width="1.2" stroke-linejoin="round"/></svg>
<svg class="ic" style="left:1441.5px;top:424px;" width="14" height="14" viewBox="0 0 14 14"><circle cx="6" cy="6" r="4.8" fill="none" stroke="#475569" stroke-width="1.3"/><path d="M9.5 9.5L13 13" stroke="#475569" stroke-width="1.3" stroke-linecap="round"/></svg>
<div class="box" style="left:281px;top:668px;width:922px;height:1px;background:#e5e7eb"></div>
<span class="t" style="left:60.0px;top:10.6px;font-size:13px;color:#0f172a;font-weight:bold;letter-spacing:0.43px">Stranded</span>
<span class="t" style="left:60.0px;top:26.1px;font-size:10.5px;color:#6b7280;letter-spacing:0.02px">Molecular Biology Workbench</span>
<span class="t" style="left:242.5px;top:17.2px;font-size:13px;color:#334155;letter-spacing:-0.82px">File</span>
<span class="t" style="left:312.4px;top:17.2px;font-size:13px;color:#334155;letter-spacing:-0.41px">Edit</span>
<span class="t" style="left:384.5px;top:17.2px;font-size:13px;color:#334155;letter-spacing:-0.58px">Analysis</span>
<span class="t" style="left:480.0px;top:17.2px;font-size:13px;color:#334155;letter-spacing:-0.42px">Tools</span>
<span class="t" style="left:988.6px;top:17.5px;font-size:13px;color:#64748b;letter-spacing:0.26px">Search documents...</span>
<span class="t" style="left:1281.5px;top:18.9px;font-size:11px;color:#ffffff;font-weight:bold;letter-spacing:0.41px">81</span>
<span class="t" style="left:1343.5px;top:17.8px;font-size:12.5px;color:#374151;letter-spacing:0.77px">JO</span>
<span class="t" style="left:1383.6px;top:17.8px;font-size:12.5px;color:#334155;-webkit-text-stroke:0.35px #334155">Joost</span>
<span class="t" style="left:50.1px;top:80.1px;font-size:14px;color:#334155;letter-spacing:-0.28px">Root</span>
<span class="t" style="left:63.8px;top:117.1px;font-size:14px;color:#334155;letter-spacing:-0.52px">EVE Finding</span>
<span class="t" style="left:63.8px;top:154.1px;font-size:14px;color:#334155;letter-spacing:-0.21px">Virus Discovery</span>
<span class="t" style="left:77.5px;top:191.1px;font-size:14px;color:#334155;letter-spacing:-0.12px">Sequencing</span>
<span class="t" style="left:63.8px;top:228.1px;font-size:14px;color:#334155;letter-spacing:0.06px">Cloning</span>
<span class="t" style="left:63.8px;top:265.1px;font-size:14px;color:#334155;letter-spacing:-0.31px">Bacterial 16S</span>
<span class="t" style="left:63.7px;top:302.1px;font-size:14px;color:#4f46e5;letter-spacing:0.23px">Mitochondrial mapping</span>
<span class="t" style="left:63.7px;top:339.1px;font-size:14px;color:#334155;letter-spacing:-0.27px">Pseudomonas</span>
<span class="t" style="left:14.3px;top:399.5px;font-size:11px;color:#6b7280;letter-spacing:-0.64px">EXTERNAL RESOURCES</span>
<span class="t" style="left:50.3px;top:433.8px;font-size:12px;color:#4b5563;letter-spacing:0.26px;-webkit-text-stroke:0.35px #4b5563">European Nucleotide Archive</span>
<span class="t" style="left:379.6px;top:61.6px;font-size:11.5px;color:#1e293b;font-weight:bold;letter-spacing:-0.68px">Name</span>
<span class="t" style="left:600.2px;top:61.6px;font-size:11.5px;color:#1e293b;font-weight:bold;letter-spacing:-0.61px">Description</span>
<span class="t" style="left:912.0px;top:61.6px;font-size:11.5px;color:#1e293b;font-weight:bold;letter-spacing:-0.98px">Sequences</span>
<span class="t" style="left:992.3px;top:61.6px;font-size:11.5px;color:#1e293b;font-weight:bold;letter-spacing:-0.73px">Length</span>
<span class="t" style="left:1090.5px;top:61.6px;font-size:11.5px;color:#1e293b;font-weight:bold;letter-spacing:-0.50px">Min Length</span>
<span class="t" style="left:1188.3px;top:61.6px;font-size:11.5px;color:#1e293b;font-weight:bold;letter-spacing:-0.51px">Max Length</span>
<span class="t" style="left:1286.2px;top:61.6px;font-size:11.5px;color:#1e293b;font-weight:bold;letter-spacing:-0.74px">Created</span>
<span class="t" style="left:1384.4px;top:61.6px;font-size:11.5px;color:#1e293b;font-weight:bold;letter-spacing:-0.24px">Modified</span>
<span class="t" style="left:379.6px;top:94.3px;font-size:12.5px;color:#334155;letter-spacing:-0.56px">Ticks</span>
<span class="t" style="left:600.2px;top:96.0px;font-size:12.5px;color:#64748b;letter-spacing:-0.07px">Alignment of mito. genomes, ticks</span>
<span class="t" style="left:912.0px;top:96.0px;font-size:12.5px;color:#475569;letter-spacing:-0.40px">223</span>
<span class="t" style="left:992.3px;top:96.0px;font-size:12.5px;color:#475569;letter-spacing:-0.20px">1,607 bp</span>
<span class="t" style="left:1286.2px;top:96.0px;font-size:12.5px;color:#94a3b8;letter-spacing:-0.26px">Mar 23, 2026</span>
<span class="t" style="left:1384.4px;top:96.0px;font-size:12.5px;color:#94a3b8;letter-spacing:-0.21px">Mar 23, 2026</span>
<span class="t" style="left:327.9px;top:223.0px;font-size:11.5px;color:#2563eb;letter-spacing:0.12px">Document View</span>
<span class="t" style="left:455.1px;top:223.0px;font-size:11.5px;color:#64748b;letter-spacing:0.10px">Distance Matrix</span>
<span class="t" style="left:581.3px;top:223.0px;font-size:11.5px;color:#64748b;letter-spacing:0.26px">Annotations</span>
<span class="t" style="left:689.5px;top:223.0px;font-size:11.5px;color:#64748b;letter-spacing:0.67px">Info</span>
<span class="t" style="left:318.5px;top:259.6px;font-size:11px;color:#a1a1aa;letter-spacing:-0.07px">Add Annotation</span>
<span class="t" style="left:429.5px;top:259.6px;font-size:11px;color:#a1a1aa;letter-spacing:-0.51px">Extract</span>
<span class="t" style="left:497.6px;top:259.6px;font-size:11px;color:#3f3f46;letter-spacing:-0.48px">Reverse Complement</span>
<span class="t" style="left:439.2px;top:287.2px;font-size:9px;color:#6b6b73;letter-spacing:-0.15px">250</span>
<span class="t" style="left:539.2px;top:287.2px;font-size:9px;color:#6b6b73;letter-spacing:-0.15px">260</span>
<span class="t" style="left:639.2px;top:287.2px;font-size:9px;color:#6b6b73;letter-spacing:-0.15px">270</span>
<span class="t" style="left:739.2px;top:287.2px;font-size:9px;color:#6b6b73;letter-spacing:-0.15px">280</span>
<span class="t" style="left:839.2px;top:287.2px;font-size:9px;color:#6b6b73;letter-spacing:-0.15px">290</span>
<span class="t" style="left:939.2px;top:287.2px;font-size:9px;color:#6b6b73;letter-spacing:-0.15px">300</span>
<span class="t" style="left:1039.2px;top:287.2px;font-size:9px;color:#6b6b73;letter-spacing:-0.15px">310</span>
<span class="t" style="left:1139.2px;top:287.2px;font-size:9px;color:#6b6b73;letter-spacing:-0.15px">320</span>
<span class="t" style="left:289.3px;top:314.1px;font-size:11px;color:#1f2937;letter-spacing:-0.52px">Consensus</span>
<span class="t" style="left:289.3px;top:350.2px;font-size:11px;color:#3f3f46;letter-spacing:-0.70px">KY457512.1</span>
<span class="t" style="left:391.0px;top:352.6px;font-size:9px;color:#a1a1aa;letter-spacing:-0.27px">1,607 bp</span>
<span class="t" style="left:289.3px;top:374.2px;font-size:11px;color:#3f3f46;letter-spacing:-0.70px">NC_067897.1</span>
<span class="t" style="left:391.0px;top:376.6px;font-size:9px;color:#a1a1aa;letter-spacing:-0.27px">1,607 bp</span>
<span class="t" style="left:289.3px;top:398.2px;font-size:11px;color:#3f3f46;letter-spacing:-0.70px">OM974111.1</span>
<span class="t" style="left:391.0px;top:400.6px;font-size:9px;color:#a1a1aa;letter-spacing:-0.27px">1,607 bp</span>
<span class="t" style="left:289.3px;top:422.2px;font-size:11px;color:#3f3f46;letter-spacing:-0.70px">NC_062071.1</span>
<span class="t" style="left:391.0px;top:424.6px;font-size:9px;color:#a1a1aa;letter-spacing:-0.27px">1,607 bp</span>
<span class="t" style="left:289.3px;top:446.2px;font-size:11px;color:#3f3f46;letter-spacing:-0.70px">NC_085539.1</span>
<span class="t" style="left:391.0px;top:448.6px;font-size:9px;color:#a1a1aa;letter-spacing:-0.27px">1,607 bp</span>
<span class="t" style="left:289.3px;top:470.2px;font-size:11px;color:#3f3f46;letter-spacing:-0.70px">NC_067860.1</span>
<span class="t" style="left:391.0px;top:472.6px;font-size:9px;color:#a1a1aa;letter-spacing:-0.27px">1,607 bp</span>
<span class="t" style="left:289.3px;top:494.2px;font-size:11px;color:#3f3f46;letter-spacing:-0.70px">NC_085538.1</span>
<span class="t" style="left:391.0px;top:496.6px;font-size:9px;color:#a1a1aa;letter-spacing:-0.27px">1,607 bp</span>
<span class="t" style="left:289.3px;top:518.2px;font-size:11px;color:#3f3f46;letter-spacing:-0.70px">NC_085535.1</span>
<span class="t" style="left:391.0px;top:520.6px;font-size:9px;color:#a1a1aa;letter-spacing:-0.27px">1,607 bp</span>
<span class="t" style="left:289.3px;top:542.2px;font-size:11px;color:#3f3f46;letter-spacing:-0.70px">NC_085536.1</span>
<span class="t" style="left:391.0px;top:544.6px;font-size:9px;color:#a1a1aa;letter-spacing:-0.27px">1,607 bp</span>
<span class="t" style="left:289.3px;top:566.2px;font-size:11px;color:#3f3f46;letter-spacing:-0.70px">OM974112.1</span>
<span class="t" style="left:391.0px;top:568.6px;font-size:9px;color:#a1a1aa;letter-spacing:-0.27px">1,607 bp</span>
<span class="t" style="left:289.3px;top:590.2px;font-size:11px;color:#3f3f46;letter-spacing:-0.70px">NC_085541.1</span>
<span class="t" style="left:391.0px;top:592.6px;font-size:9px;color:#a1a1aa;letter-spacing:-0.27px">1,607 bp</span>
<span class="t" style="left:289.3px;top:614.2px;font-size:11px;color:#3f3f46;letter-spacing:-0.70px">NC_085542.1</span>
<span class="t" style="left:391.0px;top:616.6px;font-size:9px;color:#a1a1aa;letter-spacing:-0.27px">1,607 bp</span>
<span class="t" style="left:296.2px;top:648.0px;font-size:11px;color:#3f3f46;letter-spacing:-0.23px">358,361 bp total</span>
<span class="t" style="left:977.5px;top:649.2px;font-size:9px;color:#94a3b8;letter-spacing:-0.22px">Viewing: 249 - 326 | Tracks: 20 of 223</span>
<span class="t" style="left:1120.5px;top:648.0px;font-size:11px;color:#52525b;letter-spacing:-0.33px">Identity: 87.5%</span>
<span class="t" style="left:1287.7px;top:226.5px;font-size:10.5px;color:#52525b;letter-spacing:-0.34px">100%</span>
<span class="t" style="left:1214.6px;top:268.7px;font-size:12.5px;color:#334155;font-weight:bold;letter-spacing:-0.55px">Display</span>
<span class="t" style="left:1218.2px;top:310.9px;font-size:11.5px;color:#374151;letter-spacing:-0.90px;-webkit-text-stroke:0.35px #374151">CONSENSUS CALCULATION</span>
<span class="t" style="left:1218.2px;top:339.9px;font-size:12.5px;color:#374151;letter-spacing:0.27px">Method</span>
<span class="t" style="left:1230.1px;top:376.3px;font-size:14px;color:#1f2937;letter-spacing:-0.14px">Threshold</span>
<span class="t" style="left:1218.2px;top:410.7px;font-size:11px;color:#64748b;letter-spacing:-0.43px">Uses IUPAC ambiguity codes when</span>
<span class="t" style="left:1218.2px;top:425.0px;font-size:11px;color:#64748b;letter-spacing:-0.43px">threshold not met</span>
<span class="t" style="left:1218.2px;top:454.1px;font-size:12px;color:#1f2937;letter-spacing:-0.10px">Threshold: 50%</span>
<span class="t" style="left:1218.2px;top:501.3px;font-size:10.5px;color:#94a3b8;letter-spacing:-0.27px">Permissive</span>
<span class="t" style="left:1389.6px;top:501.3px;font-size:10.5px;color:#94a3b8;letter-spacing:0.02px">Strict</span>
<span class="t" style="left:1218.2px;top:522.4px;font-size:11px;color:#475569;letter-spacing:-0.27px">Majority rule: base must have &gt;50%</span>
<span class="t" style="left:1218.2px;top:535.8px;font-size:11px;color:#475569;letter-spacing:-0.27px">support to be called alone</span>
<span class="t" style="left:1218.2px;top:563.8px;font-size:11px;color:#94a3b8;font-style:italic;letter-spacing:-0.48px">Consensus auto-updates when settings</span>
<span class="t" style="left:1218.2px;top:576.9px;font-size:11px;color:#94a3b8;font-style:italic;letter-spacing:-0.48px">change</span>
</body></html>
